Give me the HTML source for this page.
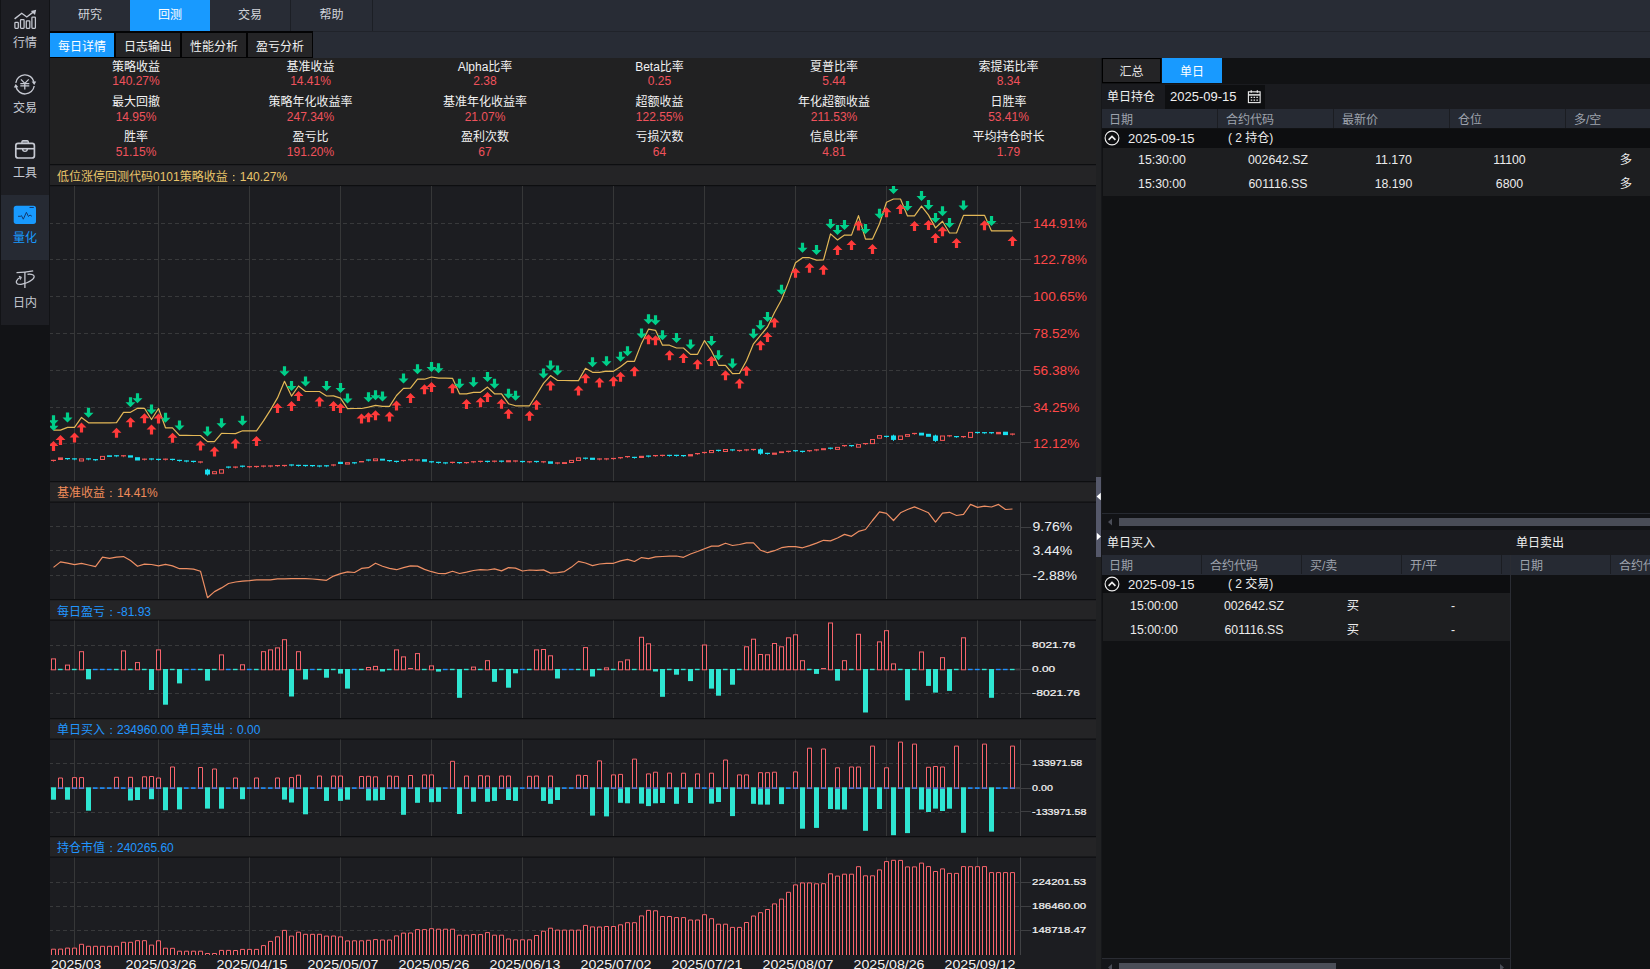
<!DOCTYPE html>
<html lang="zh-CN">
<head>
<meta charset="utf-8">
<title>回测 - 每日详情</title>
<style>
*{box-sizing:border-box;margin:0;padding:0}
html,body{width:1650px;height:969px;overflow:hidden;background:#121316}
body{position:relative;font-family:"Liberation Sans","Noto Sans CJK SC",sans-serif;font-size:12px;color:#e8e8e8;line-height:1}
.abs{position:absolute}
/* sidebar */
#side{position:absolute;left:0;top:0;width:50px;height:969px;background:#121316}
#side .strip{position:absolute;left:1px;top:0;width:48px;height:325px;background:#1d1e23}
.sitem{position:absolute;left:1px;width:48px;height:65px;color:#c6c9d2;text-align:center}
.sitem.sel{background:#262a33;color:#189aff}
.sitem svg{position:absolute}
.sitem span{position:absolute;left:0;width:48px;text-align:center;font-size:12px}
/* top */
#top{position:absolute;left:50px;top:0;width:1600px;height:32px;background:#282c35;border-bottom:1px solid #20232a}
.ttab{position:absolute;top:0;height:31px;width:81px;border-right:1px solid #1c1f25;text-align:center;line-height:30.6px;color:#d0d3da;font-size:12px}
.ttab.sel{background:#189aff;color:#fff;border-right:none;width:80px}
#sub{position:absolute;left:50px;top:32px;width:1600px;height:26px;background:#282c35}
.stab{position:absolute;top:1px;height:24px;width:64px;background:#242426;text-align:center;line-height:29px;color:#f0f0f0;font-size:12px;overflow:hidden}
.stab.sel{background:#189aff;color:#fff}
#subbg{position:absolute;left:0;top:-0.6px;width:263px;height:26.6px;background:#030304}
/* stats */
#stats{position:absolute;left:50px;top:58px;width:1046px;height:106px;background:#212122}
.st{position:absolute;width:174px;text-align:center;font-size:12px}
.st b{display:block;font-weight:normal;color:#f2f2f2;height:14.5px;line-height:15px}
.st i{display:block;font-style:normal;color:#f0525c;height:15px;line-height:15px}
/* right panel */
#right{position:absolute;left:1102px;top:58px;width:548px;height:911px;background:#111214;overflow:hidden}
.rt{position:absolute;white-space:nowrap;font-size:12px;color:#f0f0f0}
.hd{position:absolute;background:#262a33;height:19px}
.hd span{position:absolute;top:2px;line-height:19px;color:#9ea3ad;font-size:12px;white-space:nowrap}
.hd u{position:absolute;top:0;width:1px;height:19px;background:#1b1d22}
.grp{position:absolute;background:#0d0e10;height:19px}
.row{position:absolute;background:#1d1e20;height:24px;border-left:1px solid #111214}
.row span,.grp span{position:absolute;top:1px;white-space:nowrap;color:#ececec;font-size:12px}
.row span{line-height:24px;text-align:center;font-size:12.3px}
.grp span{line-height:19px;top:0.3px}
.row.up span{top:0}
</style>
</head>
<body>
<div id="side">
 <div class="strip"></div>
 <div class="sitem" style="top:0">
  <svg width="48" height="65" viewBox="1 0 48 65" style="left:0;top:0" fill="none" stroke="#c6c9d2" stroke-width="1.25"><rect x="14.9" y="22.4" width="3.4" height="5.9" rx="0.7"/><rect x="20.5" y="19.6" width="3.6" height="8.7" rx="0.7"/><rect x="26.3" y="20.9" width="3.5" height="7.4" rx="0.7"/><rect x="31.9" y="17.1" width="3.5" height="11.2" rx="0.7"/><path d="M14.6 18.9L21.7 13.3L26.8 17L33.5 11.9" stroke-width="1.4"/><path d="M36.2 9.8L30.8 10.9L35 14.9z" fill="#c6c9d2" stroke="none"/></svg>
  <span style="top:36.5px">行情</span></div>
 <div class="sitem" style="top:65px">
  <svg width="48" height="65" viewBox="1 0 48 65" style="left:0;top:0" fill="none" stroke="#c6c9d2" stroke-width="1.35"><path d="M15.8 17.8A9.3 9.3 0 0 1 34 16.8"/><path d="M34.2 21A9.3 9.3 0 0 1 16 22"/><path d="M36.2 16.4L34.3 19.9L31.6 16.6z" fill="#c6c9d2" stroke="none"/><path d="M13.8 22.4L15.7 18.9L18.4 22.2z" fill="#c6c9d2" stroke="none"/><path d="M20.9 14.4L24.8 18.4L28.7 14.4M24.8 18.4V24.6M20.3 18.7H29.3M20.3 20.8H29.3" stroke-width="1.25"/></svg>
  <span style="top:36.5px">交易</span></div>
 <div class="sitem" style="top:130px">
  <svg width="48" height="65" viewBox="1 0 48 65" style="left:0;top:0" fill="none" stroke="#c6c9d2" stroke-width="1.7"><rect x="15.8" y="13.4" width="18.6" height="14.6" rx="2.3"/><path d="M21.9 13V11.8Q21.9 10.6 23.1 10.6H27.1Q28.3 10.6 28.3 11.8V13" fill="#8d909a" stroke-width="1.3"/><path d="M16 18.7H34.2" stroke-width="1.6"/><path d="M22.6 19A2.35 2.35 0 0 0 27.3 19" stroke-width="1.4"/></svg>
  <span style="top:37px">工具</span></div>
 <div class="sitem sel" style="top:195px">
  <svg width="48" height="65" viewBox="1 0 48 65" style="left:0;top:0"><rect x="13.7" y="10.7" width="22.3" height="18.2" rx="2.6" fill="#189aff"/><path d="M18 21.3H20.6L21.4 20.6L23.3 24.2L26.4 17.3L28.5 21.5L30 20L31.9 21.3" fill="none" stroke="#143a70" stroke-width="1"/><path d="M29.5 12.5H33.8" stroke="#143a70" stroke-width="1"/></svg>
  <span style="top:37px">量化</span></div>
 <div class="sitem" style="top:260px">
  <svg width="48" height="65" viewBox="1 0 48 65" style="left:0;top:0" fill="none" stroke="#c6c9d2" stroke-width="1.3"><path d="M16.5 12.6Q25 12.6 33.2 10.9"/><path d="M24.9 12V28"/><path d="M20.6 17.4Q17.5 18.5 16.4 21.2Q15.6 24.6 21 24.3Q27 23.8 32.4 19.6Q35.5 16.6 33.2 15Q30.5 13.8 27.5 14.4"/><path d="M18.9 16.2L21.2 17.3L20.3 19.6" stroke-width="1.1"/></svg>
  <span style="top:37px">日内</span></div>
</div>

<div id="top">
 <div class="ttab" style="left:0">研究</div>
 <div class="ttab sel" style="left:80px">回测</div>
 <div class="ttab" style="left:160px">交易</div>
 <div class="ttab" style="left:241px;width:82px">帮助</div>
</div>
<div id="sub">
 <div id="subbg"></div>
 <div class="stab sel" style="left:0">每日详情</div>
 <div class="stab" style="left:66px">日志输出</div>
 <div class="stab" style="left:132px">性能分析</div>
 <div class="stab" style="left:198px">盈亏分析</div>
</div>

<div id="stats">
<div class="st" style="left:-1.0px;top:2px"><b style="height:13.5px">策略收益</b><i>140.27%</i></div>
<div class="st" style="left:173.5px;top:2px"><b style="height:13.5px">基准收益</b><i>14.41%</i></div>
<div class="st" style="left:348.0px;top:2px"><b style="height:13.5px">Alpha比率</b><i>2.38</i></div>
<div class="st" style="left:522.5px;top:2px"><b style="height:13.5px">Beta比率</b><i>0.25</i></div>
<div class="st" style="left:697.0px;top:2px"><b style="height:13.5px">夏普比率</b><i>5.44</i></div>
<div class="st" style="left:871.5px;top:2px"><b style="height:13.5px">索提诺比率</b><i>8.34</i></div>
<div class="st" style="left:-1.0px;top:37px"><b style="height:15px">最大回撤</b><i>14.95%</i></div>
<div class="st" style="left:173.5px;top:37px"><b style="height:15px">策略年化收益率</b><i>247.34%</i></div>
<div class="st" style="left:348.0px;top:37px"><b style="height:15px">基准年化收益率</b><i>21.07%</i></div>
<div class="st" style="left:522.5px;top:37px"><b style="height:15px">超额收益</b><i>122.55%</i></div>
<div class="st" style="left:697.0px;top:37px"><b style="height:15px">年化超额收益</b><i>211.53%</i></div>
<div class="st" style="left:871.5px;top:37px"><b style="height:15px">日胜率</b><i>53.41%</i></div>
<div class="st" style="left:-1.0px;top:72px"><b style="height:15px">胜率</b><i>51.15%</i></div>
<div class="st" style="left:173.5px;top:72px"><b style="height:15px">盈亏比</b><i>191.20%</i></div>
<div class="st" style="left:348.0px;top:72px"><b style="height:15px">盈利次数</b><i>67</i></div>
<div class="st" style="left:522.5px;top:72px"><b style="height:15px">亏损次数</b><i>64</i></div>
<div class="st" style="left:697.0px;top:72px"><b style="height:15px">信息比率</b><i>4.81</i></div>
<div class="st" style="left:871.5px;top:72px"><b style="height:15px">平均持仓时长</b><i>1.79</i></div>

</div>

<svg id="charts" width="1650" height="969" viewBox="0 0 1650 969" style="position:absolute;left:0;top:0"><defs><clipPath id="c1"><rect x="50" y="186" width="1046" height="295"/></clipPath><clipPath id="c2"><rect x="50" y="502.5" width="1046" height="96.5"/></clipPath><clipPath id="c3"><rect x="50" y="620.5" width="1046" height="97.5"/></clipPath><clipPath id="c4"><rect x="50" y="739.5" width="1046" height="96.5"/></clipPath><clipPath id="c5"><rect x="50" y="857.5" width="1046" height="97.5"/></clipPath></defs><rect x="50" y="164" width="1046" height="805" fill="#1c1d21"/><rect x="50" y="164" width="1046" height="22" fill="#242426"/><rect x="50" y="164" width="1046" height="1.2" fill="#0d0e10"/><rect x="50" y="185" width="1046" height="1.2" fill="#0d0e10"/><rect x="50" y="481" width="1046" height="21.5" fill="#242426"/><rect x="50" y="481" width="1046" height="1.2" fill="#0d0e10"/><rect x="50" y="501.5" width="1046" height="1.2" fill="#0d0e10"/><rect x="50" y="599" width="1046" height="21.5" fill="#242426"/><rect x="50" y="599" width="1046" height="1.2" fill="#0d0e10"/><rect x="50" y="619.5" width="1046" height="1.2" fill="#0d0e10"/><rect x="50" y="718" width="1046" height="21.5" fill="#242426"/><rect x="50" y="718" width="1046" height="1.2" fill="#0d0e10"/><rect x="50" y="738.5" width="1046" height="1.2" fill="#0d0e10"/><rect x="50" y="836" width="1046" height="21.5" fill="#242426"/><rect x="50" y="836" width="1046" height="1.2" fill="#0d0e10"/><rect x="50" y="856.5" width="1046" height="1.2" fill="#0d0e10"/><rect x="74.0" y="186" width="1" height="295" fill="#363738"/><rect x="158.0" y="186" width="1" height="295" fill="#363738"/><rect x="249.0" y="186" width="1" height="295" fill="#363738"/><rect x="340.0" y="186" width="1" height="295" fill="#363738"/><rect x="431.0" y="186" width="1" height="295" fill="#363738"/><rect x="522.0" y="186" width="1" height="295" fill="#363738"/><rect x="613.0" y="186" width="1" height="295" fill="#363738"/><rect x="704.0" y="186" width="1" height="295" fill="#363738"/><rect x="795.0" y="186" width="1" height="295" fill="#363738"/><rect x="886.0" y="186" width="1" height="295" fill="#363738"/><rect x="977.0" y="186" width="1" height="295" fill="#363738"/><rect x="1020" y="186" width="1" height="295" fill="#404144"/><rect x="74.0" y="502.5" width="1" height="96.5" fill="#363738"/><rect x="158.0" y="502.5" width="1" height="96.5" fill="#363738"/><rect x="249.0" y="502.5" width="1" height="96.5" fill="#363738"/><rect x="340.0" y="502.5" width="1" height="96.5" fill="#363738"/><rect x="431.0" y="502.5" width="1" height="96.5" fill="#363738"/><rect x="522.0" y="502.5" width="1" height="96.5" fill="#363738"/><rect x="613.0" y="502.5" width="1" height="96.5" fill="#363738"/><rect x="704.0" y="502.5" width="1" height="96.5" fill="#363738"/><rect x="795.0" y="502.5" width="1" height="96.5" fill="#363738"/><rect x="886.0" y="502.5" width="1" height="96.5" fill="#363738"/><rect x="977.0" y="502.5" width="1" height="96.5" fill="#363738"/><rect x="1020" y="502.5" width="1" height="96.5" fill="#404144"/><rect x="74.0" y="620.5" width="1" height="97.5" fill="#363738"/><rect x="158.0" y="620.5" width="1" height="97.5" fill="#363738"/><rect x="249.0" y="620.5" width="1" height="97.5" fill="#363738"/><rect x="340.0" y="620.5" width="1" height="97.5" fill="#363738"/><rect x="431.0" y="620.5" width="1" height="97.5" fill="#363738"/><rect x="522.0" y="620.5" width="1" height="97.5" fill="#363738"/><rect x="613.0" y="620.5" width="1" height="97.5" fill="#363738"/><rect x="704.0" y="620.5" width="1" height="97.5" fill="#363738"/><rect x="795.0" y="620.5" width="1" height="97.5" fill="#363738"/><rect x="886.0" y="620.5" width="1" height="97.5" fill="#363738"/><rect x="977.0" y="620.5" width="1" height="97.5" fill="#363738"/><rect x="1020" y="620.5" width="1" height="97.5" fill="#404144"/><rect x="74.0" y="739.5" width="1" height="96.5" fill="#363738"/><rect x="158.0" y="739.5" width="1" height="96.5" fill="#363738"/><rect x="249.0" y="739.5" width="1" height="96.5" fill="#363738"/><rect x="340.0" y="739.5" width="1" height="96.5" fill="#363738"/><rect x="431.0" y="739.5" width="1" height="96.5" fill="#363738"/><rect x="522.0" y="739.5" width="1" height="96.5" fill="#363738"/><rect x="613.0" y="739.5" width="1" height="96.5" fill="#363738"/><rect x="704.0" y="739.5" width="1" height="96.5" fill="#363738"/><rect x="795.0" y="739.5" width="1" height="96.5" fill="#363738"/><rect x="886.0" y="739.5" width="1" height="96.5" fill="#363738"/><rect x="977.0" y="739.5" width="1" height="96.5" fill="#363738"/><rect x="1020" y="739.5" width="1" height="96.5" fill="#404144"/><rect x="74.0" y="857.5" width="1" height="97.5" fill="#363738"/><rect x="158.0" y="857.5" width="1" height="97.5" fill="#363738"/><rect x="249.0" y="857.5" width="1" height="97.5" fill="#363738"/><rect x="340.0" y="857.5" width="1" height="97.5" fill="#363738"/><rect x="431.0" y="857.5" width="1" height="97.5" fill="#363738"/><rect x="522.0" y="857.5" width="1" height="97.5" fill="#363738"/><rect x="613.0" y="857.5" width="1" height="97.5" fill="#363738"/><rect x="704.0" y="857.5" width="1" height="97.5" fill="#363738"/><rect x="795.0" y="857.5" width="1" height="97.5" fill="#363738"/><rect x="886.0" y="857.5" width="1" height="97.5" fill="#363738"/><rect x="977.0" y="857.5" width="1" height="97.5" fill="#363738"/><rect x="1020" y="857.5" width="1" height="97.5" fill="#404144"/><line x1="50" y1="223.5" x2="1020" y2="223.5" stroke="#38393b" stroke-width="1" stroke-dasharray="4 3" stroke-dashoffset="1"/><line x1="50" y1="259.5" x2="1020" y2="259.5" stroke="#38393b" stroke-width="1" stroke-dasharray="4 3" stroke-dashoffset="1"/><line x1="50" y1="296.5" x2="1020" y2="296.5" stroke="#38393b" stroke-width="1" stroke-dasharray="4 3" stroke-dashoffset="1"/><line x1="50" y1="333.5" x2="1020" y2="333.5" stroke="#38393b" stroke-width="1" stroke-dasharray="4 3" stroke-dashoffset="1"/><line x1="50" y1="370.5" x2="1020" y2="370.5" stroke="#38393b" stroke-width="1" stroke-dasharray="4 3" stroke-dashoffset="1"/><line x1="50" y1="407.5" x2="1020" y2="407.5" stroke="#38393b" stroke-width="1" stroke-dasharray="4 3" stroke-dashoffset="1"/><line x1="50" y1="443.5" x2="1020" y2="443.5" stroke="#38393b" stroke-width="1" stroke-dasharray="4 3" stroke-dashoffset="1"/><rect x="1021" y="222.0" width="10" height="1" fill="#3e3f42"/><rect x="1021" y="259.0" width="10" height="1" fill="#3e3f42"/><rect x="1021" y="296.0" width="10" height="1" fill="#3e3f42"/><rect x="1021" y="333.0" width="10" height="1" fill="#3e3f42"/><rect x="1021" y="370.0" width="10" height="1" fill="#3e3f42"/><rect x="1021" y="406.0" width="10" height="1" fill="#3e3f42"/><rect x="1021" y="442.0" width="10" height="1" fill="#3e3f42"/><line x1="50" y1="526.5" x2="1020" y2="526.5" stroke="#38393b" stroke-width="1" stroke-dasharray="4 3" stroke-dashoffset="1"/><line x1="50" y1="550.5" x2="1020" y2="550.5" stroke="#38393b" stroke-width="1" stroke-dasharray="4 3" stroke-dashoffset="1"/><line x1="50" y1="575.5" x2="1020" y2="575.5" stroke="#38393b" stroke-width="1" stroke-dasharray="4 3" stroke-dashoffset="1"/><rect x="1021" y="527.0" width="10" height="1" fill="#3e3f42"/><rect x="1021" y="574.0" width="10" height="1" fill="#3e3f42"/><line x1="50" y1="645.5" x2="1020" y2="645.5" stroke="#38393b" stroke-width="1" stroke-dasharray="4 3" stroke-dashoffset="1"/><line x1="50" y1="669.5" x2="1020" y2="669.5" stroke="#38393b" stroke-width="1" stroke-dasharray="4 3" stroke-dashoffset="1"/><line x1="50" y1="693.5" x2="1020" y2="693.5" stroke="#38393b" stroke-width="1" stroke-dasharray="4 3" stroke-dashoffset="1"/><rect x="1021" y="645.0" width="10" height="1" fill="#3e3f42"/><rect x="1021" y="669.0" width="10" height="1" fill="#3e3f42"/><rect x="1021" y="693.0" width="10" height="1" fill="#3e3f42"/><line x1="50" y1="763.5" x2="1020" y2="763.5" stroke="#38393b" stroke-width="1" stroke-dasharray="4 3" stroke-dashoffset="1"/><line x1="50" y1="788" x2="1020" y2="788" stroke="#38393b" stroke-width="1" stroke-dasharray="4 3" stroke-dashoffset="1"/><line x1="50" y1="812.5" x2="1020" y2="812.5" stroke="#38393b" stroke-width="1" stroke-dasharray="4 3" stroke-dashoffset="1"/><rect x="1021" y="764.0" width="10" height="1" fill="#3e3f42"/><rect x="1021" y="788.0" width="10" height="1" fill="#3e3f42"/><rect x="1021" y="811.0" width="10" height="1" fill="#3e3f42"/><line x1="50" y1="882.5" x2="1020" y2="882.5" stroke="#38393b" stroke-width="1" stroke-dasharray="4 3" stroke-dashoffset="1"/><line x1="50" y1="906.5" x2="1020" y2="906.5" stroke="#38393b" stroke-width="1" stroke-dasharray="4 3" stroke-dashoffset="1"/><line x1="50" y1="930.5" x2="1020" y2="930.5" stroke="#38393b" stroke-width="1" stroke-dasharray="4 3" stroke-dashoffset="1"/><rect x="1021" y="882.0" width="10" height="1" fill="#3e3f42"/><rect x="1021" y="906.0" width="10" height="1" fill="#3e3f42"/><rect x="1021" y="930.0" width="10" height="1" fill="#3e3f42"/><text x="1033" y="228.1" font-family="Liberation Sans, Noto Sans CJK SC, sans-serif" font-size="12.2" font-weight="normal" fill="#ff4848" textLength="54" lengthAdjust="spacingAndGlyphs">144.91%</text><text x="1033" y="264.1" font-family="Liberation Sans, Noto Sans CJK SC, sans-serif" font-size="12.2" font-weight="normal" fill="#ff4848" textLength="54" lengthAdjust="spacingAndGlyphs">122.78%</text><text x="1033" y="301.1" font-family="Liberation Sans, Noto Sans CJK SC, sans-serif" font-size="12.2" font-weight="normal" fill="#ff4848" textLength="54" lengthAdjust="spacingAndGlyphs">100.65%</text><text x="1033" y="338.1" font-family="Liberation Sans, Noto Sans CJK SC, sans-serif" font-size="12.2" font-weight="normal" fill="#ff4848" textLength="46.3" lengthAdjust="spacingAndGlyphs">78.52%</text><text x="1033" y="375.1" font-family="Liberation Sans, Noto Sans CJK SC, sans-serif" font-size="12.2" font-weight="normal" fill="#ff4848" textLength="46.3" lengthAdjust="spacingAndGlyphs">56.38%</text><text x="1033" y="412.1" font-family="Liberation Sans, Noto Sans CJK SC, sans-serif" font-size="12.2" font-weight="normal" fill="#ff4848" textLength="46.3" lengthAdjust="spacingAndGlyphs">34.25%</text><text x="1033" y="448.1" font-family="Liberation Sans, Noto Sans CJK SC, sans-serif" font-size="12.2" font-weight="normal" fill="#ff4848" textLength="46.3" lengthAdjust="spacingAndGlyphs">12.12%</text><text x="1032.5" y="531.1" font-family="Liberation Sans, Noto Sans CJK SC, sans-serif" font-size="12.2" font-weight="normal" fill="#eef0f2" textLength="39.7" lengthAdjust="spacingAndGlyphs">9.76%</text><text x="1032.5" y="555.1" font-family="Liberation Sans, Noto Sans CJK SC, sans-serif" font-size="12.2" font-weight="normal" fill="#eef0f2" textLength="39.7" lengthAdjust="spacingAndGlyphs">3.44%</text><text x="1032.5" y="580.1" font-family="Liberation Sans, Noto Sans CJK SC, sans-serif" font-size="12.2" font-weight="normal" fill="#eef0f2" textLength="44.5" lengthAdjust="spacingAndGlyphs">-2.88%</text><text x="1032.1" y="648.0" font-family="Liberation Sans, Noto Sans CJK SC, sans-serif" font-size="9.7" fill="#f4f4f4" stroke="#f4f4f4" stroke-width="0.22" textLength="43.3" lengthAdjust="spacingAndGlyphs">8021.76</text><text x="1032.1" y="672.0" font-family="Liberation Sans, Noto Sans CJK SC, sans-serif" font-size="9.7" fill="#f4f4f4" stroke="#f4f4f4" stroke-width="0.22" textLength="23.1" lengthAdjust="spacingAndGlyphs">0.00</text><text x="1032.1" y="696.0" font-family="Liberation Sans, Noto Sans CJK SC, sans-serif" font-size="9.7" fill="#f4f4f4" stroke="#f4f4f4" stroke-width="0.22" textLength="48" lengthAdjust="spacingAndGlyphs">-8021.76</text><text x="1032.1" y="766.0" font-family="Liberation Sans, Noto Sans CJK SC, sans-serif" font-size="9.7" fill="#f4f4f4" stroke="#f4f4f4" stroke-width="0.22" textLength="50.1" lengthAdjust="spacingAndGlyphs">133971.58</text><text x="1032.1" y="790.5" font-family="Liberation Sans, Noto Sans CJK SC, sans-serif" font-size="9.7" fill="#f4f4f4" stroke="#f4f4f4" stroke-width="0.22" textLength="20.8" lengthAdjust="spacingAndGlyphs">0.00</text><text x="1032.1" y="815.0" font-family="Liberation Sans, Noto Sans CJK SC, sans-serif" font-size="9.7" fill="#f4f4f4" stroke="#f4f4f4" stroke-width="0.22" textLength="54.3" lengthAdjust="spacingAndGlyphs">-133971.58</text><text x="1032.1" y="885.0" font-family="Liberation Sans, Noto Sans CJK SC, sans-serif" font-size="9.7" fill="#f4f4f4" stroke="#f4f4f4" stroke-width="0.22" textLength="54.1" lengthAdjust="spacingAndGlyphs">224201.53</text><text x="1032.1" y="909.0" font-family="Liberation Sans, Noto Sans CJK SC, sans-serif" font-size="9.7" fill="#f4f4f4" stroke="#f4f4f4" stroke-width="0.22" textLength="54.1" lengthAdjust="spacingAndGlyphs">186460.00</text><text x="1032.1" y="933.0" font-family="Liberation Sans, Noto Sans CJK SC, sans-serif" font-size="9.7" fill="#f4f4f4" stroke="#f4f4f4" stroke-width="0.22" textLength="54.1" lengthAdjust="spacingAndGlyphs">148718.47</text><text x="57" y="180.6" font-family="Liberation Sans, Noto Sans CJK SC, sans-serif" font-size="12"><tspan fill="#e9c46a">低位涨停回测代码0101策略收益<tspan font-family="WenQuanYi Zen Hei, sans-serif">：</tspan>140.27%</tspan></text><text x="57" y="497.2" font-family="Liberation Sans, Noto Sans CJK SC, sans-serif" font-size="12"><tspan fill="#f08c5a">基准收益<tspan font-family="WenQuanYi Zen Hei, sans-serif">：</tspan>14.41%</tspan></text><text x="57" y="615.6" font-family="Liberation Sans, Noto Sans CJK SC, sans-serif" font-size="12"><tspan fill="#2196ff">每日盈亏<tspan font-family="WenQuanYi Zen Hei, sans-serif">：</tspan>-81.93</tspan></text><text x="57" y="733.8" font-family="Liberation Sans, Noto Sans CJK SC, sans-serif" font-size="12"><tspan fill="#2196ff">单日买入<tspan font-family="WenQuanYi Zen Hei, sans-serif">：</tspan>234960.00 单日卖出<tspan font-family="WenQuanYi Zen Hei, sans-serif">：</tspan>0.00</tspan></text><text x="57" y="852.4" font-family="Liberation Sans, Noto Sans CJK SC, sans-serif" font-size="12"><tspan fill="#2196ff">持仓市值<tspan font-family="WenQuanYi Zen Hei, sans-serif">：</tspan>240265.60</tspan></text><g clip-path="url(#c1)"><rect x="51" y="459.8" width="5" height="1.2" fill="#f25555"/><rect x="53" y="459.8" width="1" height="2" fill="#f25555" opacity="0.7"/><rect x="58" y="457.4" width="5" height="2.6" fill="#f25555"/><rect x="65" y="458" width="5" height="1.2" fill="#19dff0"/><rect x="67" y="458" width="1" height="2" fill="#19dff0" opacity="0.7"/><rect x="72" y="458.3" width="5" height="1.2" fill="#19dff0"/><rect x="74" y="458.3" width="1" height="2" fill="#19dff0" opacity="0.7"/><rect x="79.5" y="458.9" width="4" height="2.1" fill="none" stroke="#f25555" stroke-width="1"/><rect x="86" y="458.3" width="5" height="1.2" fill="#19dff0"/><rect x="88" y="458.3" width="1" height="2" fill="#19dff0" opacity="0.7"/><rect x="93" y="459.1" width="5" height="1.2" fill="#19dff0"/><rect x="95" y="459.1" width="1" height="2" fill="#19dff0" opacity="0.7"/><rect x="100.5" y="456.4" width="4" height="3.1" fill="none" stroke="#f25555" stroke-width="1"/><rect x="107" y="455.3" width="5" height="1.6" fill="#19dff0"/><rect x="114" y="455.2" width="5" height="1.2" fill="#19dff0"/><rect x="116" y="455.2" width="1" height="2" fill="#19dff0" opacity="0.7"/><rect x="121" y="455.2" width="5" height="1.2" fill="#f25555"/><rect x="123" y="455.2" width="1" height="2" fill="#f25555" opacity="0.7"/><rect x="128" y="455.3" width="5" height="2.3" fill="#19dff0"/><rect x="135" y="457.2" width="5" height="3.3" fill="#19dff0"/><rect x="142" y="458.6" width="5" height="1.2" fill="#f25555"/><rect x="144" y="458.6" width="1" height="2" fill="#f25555" opacity="0.7"/><rect x="149" y="458.4" width="5" height="1.2" fill="#19dff0"/><rect x="151" y="458.4" width="1" height="2" fill="#19dff0" opacity="0.7"/><rect x="156" y="458.8" width="5" height="1.2" fill="#19dff0"/><rect x="158" y="458.8" width="1" height="2" fill="#19dff0" opacity="0.7"/><rect x="163" y="458.6" width="5" height="1.2" fill="#f25555"/><rect x="165" y="458.6" width="1" height="2" fill="#f25555" opacity="0.7"/><rect x="170" y="458.8" width="5" height="1.2" fill="#19dff0"/><rect x="172" y="458.8" width="1" height="2" fill="#19dff0" opacity="0.7"/><rect x="177" y="459.8" width="5" height="1.2" fill="#19dff0"/><rect x="179" y="459.8" width="1" height="2" fill="#19dff0" opacity="0.7"/><rect x="184" y="460.4" width="5" height="1.2" fill="#19dff0"/><rect x="186" y="460.4" width="1" height="2" fill="#19dff0" opacity="0.7"/><rect x="191" y="460.8" width="5" height="1.2" fill="#19dff0"/><rect x="193" y="460.8" width="1" height="2" fill="#19dff0" opacity="0.7"/><rect x="198" y="461.4" width="5" height="1.2" fill="#f25555"/><rect x="200" y="461.4" width="1" height="2" fill="#f25555" opacity="0.7"/><rect x="205" y="469.6" width="5" height="4.9" fill="#19dff0"/><rect x="207" y="468.8" width="1" height="6.7" fill="#19dff0"/><rect x="212.5" y="471.7" width="4" height="2" fill="none" stroke="#f25555" stroke-width="1"/><rect x="219.5" y="469.7" width="4" height="3.5" fill="none" stroke="#f25555" stroke-width="1"/><rect x="226" y="466.5" width="5" height="1.2" fill="#19dff0"/><rect x="228" y="466.5" width="1" height="2" fill="#19dff0" opacity="0.7"/><rect x="233" y="466.5" width="5" height="1.2" fill="#f25555"/><rect x="235" y="466.5" width="1" height="2" fill="#f25555" opacity="0.7"/><rect x="240" y="465.6" width="5" height="1.2" fill="#19dff0"/><rect x="242" y="465.6" width="1" height="2" fill="#19dff0" opacity="0.7"/><rect x="247" y="466.1" width="5" height="1.2" fill="#f25555"/><rect x="249" y="466.1" width="1" height="2" fill="#f25555" opacity="0.7"/><rect x="254" y="465.9" width="5" height="1.2" fill="#f25555"/><rect x="256" y="465.9" width="1" height="2" fill="#f25555" opacity="0.7"/><rect x="261" y="465.5" width="5" height="1.2" fill="#f25555"/><rect x="263" y="465.5" width="1" height="2" fill="#f25555" opacity="0.7"/><rect x="268" y="465.4" width="5" height="1.2" fill="#f25555"/><rect x="270" y="465.4" width="1" height="2" fill="#f25555" opacity="0.7"/><rect x="275" y="465" width="5" height="1.2" fill="#f25555"/><rect x="277" y="465" width="1" height="2" fill="#f25555" opacity="0.7"/><rect x="282" y="464.9" width="5" height="1.2" fill="#f25555"/><rect x="284" y="464.9" width="1" height="2" fill="#f25555" opacity="0.7"/><rect x="289" y="464.4" width="5" height="1.2" fill="#19dff0"/><rect x="291" y="464.4" width="1" height="2" fill="#19dff0" opacity="0.7"/><rect x="296" y="464.8" width="5" height="1.2" fill="#19dff0"/><rect x="298" y="464.8" width="1" height="2" fill="#19dff0" opacity="0.7"/><rect x="303" y="464.9" width="5" height="1.2" fill="#19dff0"/><rect x="305" y="464.9" width="1" height="2" fill="#19dff0" opacity="0.7"/><rect x="310" y="465" width="5" height="1.2" fill="#19dff0"/><rect x="312" y="465" width="1" height="2" fill="#19dff0" opacity="0.7"/><rect x="317" y="465.4" width="5" height="1.2" fill="#19dff0"/><rect x="319" y="465.4" width="1" height="2" fill="#19dff0" opacity="0.7"/><rect x="324" y="465.2" width="5" height="1.2" fill="#19dff0"/><rect x="326" y="465.2" width="1" height="2" fill="#19dff0" opacity="0.7"/><rect x="331" y="464.4" width="5" height="1.2" fill="#f25555"/><rect x="333" y="464.4" width="1" height="2" fill="#f25555" opacity="0.7"/><rect x="338" y="461.8" width="5" height="2.2" fill="#19dff0"/><rect x="345.5" y="462.7" width="4" height="1.4" fill="none" stroke="#f25555" stroke-width="1"/><rect x="352" y="462.2" width="5" height="1.2" fill="#19dff0"/><rect x="354" y="462.2" width="1" height="2" fill="#19dff0" opacity="0.7"/><rect x="359" y="461" width="5" height="1.4" fill="#f25555"/><rect x="366" y="459.4" width="5" height="1.2" fill="#19dff0"/><rect x="368" y="459.4" width="1" height="2" fill="#19dff0" opacity="0.7"/><rect x="373.5" y="458.9" width="4" height="1.8" fill="none" stroke="#f25555" stroke-width="1"/><rect x="380" y="458.7" width="5" height="1.9" fill="#19dff0"/><rect x="387" y="460" width="5" height="1.2" fill="#19dff0"/><rect x="389" y="460" width="1" height="2" fill="#19dff0" opacity="0.7"/><rect x="394" y="460.8" width="5" height="1.2" fill="#19dff0"/><rect x="396" y="460.8" width="1" height="2" fill="#19dff0" opacity="0.7"/><rect x="401" y="459.9" width="5" height="1.2" fill="#f25555"/><rect x="403" y="459.9" width="1" height="2" fill="#f25555" opacity="0.7"/><rect x="408" y="459.2" width="5" height="1.2" fill="#f25555"/><rect x="410" y="459.2" width="1" height="2" fill="#f25555" opacity="0.7"/><rect x="415" y="459.4" width="5" height="1.2" fill="#f25555"/><rect x="417" y="459.4" width="1" height="2" fill="#f25555" opacity="0.7"/><rect x="422" y="459.2" width="5" height="2.5" fill="#19dff0"/><rect x="429" y="461.2" width="5" height="1.2" fill="#19dff0"/><rect x="431" y="461.2" width="1" height="2" fill="#19dff0" opacity="0.7"/><rect x="436" y="461.8" width="5" height="1.2" fill="#19dff0"/><rect x="438" y="461.8" width="1" height="2" fill="#19dff0" opacity="0.7"/><rect x="443" y="462.3" width="5" height="1.2" fill="#19dff0"/><rect x="445" y="462.3" width="1" height="2" fill="#19dff0" opacity="0.7"/><rect x="450" y="461.8" width="5" height="1.2" fill="#f25555"/><rect x="452" y="461.8" width="1" height="2" fill="#f25555" opacity="0.7"/><rect x="457" y="462" width="5" height="1.2" fill="#19dff0"/><rect x="459" y="462" width="1" height="2" fill="#19dff0" opacity="0.7"/><rect x="464" y="462" width="5" height="1.2" fill="#f25555"/><rect x="466" y="462" width="1" height="2" fill="#f25555" opacity="0.7"/><rect x="471" y="461.2" width="5" height="1.2" fill="#f25555"/><rect x="473" y="461.2" width="1" height="2" fill="#f25555" opacity="0.7"/><rect x="478" y="460.8" width="5" height="1.2" fill="#f25555"/><rect x="480" y="460.8" width="1" height="2" fill="#f25555" opacity="0.7"/><rect x="485" y="460.8" width="5" height="1.2" fill="#19dff0"/><rect x="487" y="460.8" width="1" height="2" fill="#19dff0" opacity="0.7"/><rect x="492" y="460.6" width="5" height="1.2" fill="#f25555"/><rect x="494" y="460.6" width="1" height="2" fill="#f25555" opacity="0.7"/><rect x="499" y="460.6" width="5" height="1.2" fill="#19dff0"/><rect x="501" y="460.6" width="1" height="2" fill="#19dff0" opacity="0.7"/><rect x="506" y="460.2" width="5" height="2.1" fill="#f25555"/><rect x="513" y="460.4" width="5" height="1.2" fill="#f25555"/><rect x="515" y="460.4" width="1" height="2" fill="#f25555" opacity="0.7"/><rect x="520" y="460.9" width="5" height="1.2" fill="#19dff0"/><rect x="522" y="460.9" width="1" height="2" fill="#19dff0" opacity="0.7"/><rect x="527" y="461.2" width="5" height="1.2" fill="#f25555"/><rect x="529" y="461.2" width="1" height="2" fill="#f25555" opacity="0.7"/><rect x="534" y="460.9" width="5" height="1.2" fill="#19dff0"/><rect x="536" y="460.9" width="1" height="2" fill="#19dff0" opacity="0.7"/><rect x="541" y="461.2" width="5" height="1.2" fill="#f25555"/><rect x="543" y="461.2" width="1" height="2" fill="#f25555" opacity="0.7"/><rect x="548" y="461.3" width="5" height="2.5" fill="#19dff0"/><rect x="555" y="462.4" width="5" height="1.2" fill="#f25555"/><rect x="557" y="462.4" width="1" height="2" fill="#f25555" opacity="0.7"/><rect x="562" y="462.1" width="5" height="1.9" fill="#f25555"/><rect x="569.5" y="460.4" width="4" height="2.1" fill="none" stroke="#f25555" stroke-width="1"/><rect x="576.5" y="457.9" width="4" height="2.6" fill="none" stroke="#f25555" stroke-width="1"/><rect x="583" y="457.6" width="5" height="1.2" fill="#19dff0"/><rect x="585" y="457.6" width="1" height="2" fill="#19dff0" opacity="0.7"/><rect x="590" y="457.7" width="5" height="2.2" fill="#19dff0"/><rect x="597" y="458.4" width="5" height="1.2" fill="#f25555"/><rect x="599" y="458.4" width="1" height="2" fill="#f25555" opacity="0.7"/><rect x="604" y="458.3" width="5" height="1.2" fill="#f25555"/><rect x="606" y="458.3" width="1" height="2" fill="#f25555" opacity="0.7"/><rect x="611" y="457.9" width="5" height="1.2" fill="#f25555"/><rect x="613" y="457.9" width="1" height="2" fill="#f25555" opacity="0.7"/><rect x="618" y="457.1" width="5" height="1.2" fill="#f25555"/><rect x="620" y="457.1" width="1" height="2" fill="#f25555" opacity="0.7"/><rect x="625" y="456" width="5" height="1.2" fill="#f25555"/><rect x="627" y="456" width="1" height="2" fill="#f25555" opacity="0.7"/><rect x="632" y="456.8" width="5" height="1.2" fill="#19dff0"/><rect x="634" y="456.8" width="1" height="2" fill="#19dff0" opacity="0.7"/><rect x="639" y="455.8" width="5" height="2.2" fill="#f25555"/><rect x="646" y="455.5" width="5" height="1.2" fill="#19dff0"/><rect x="648" y="455.5" width="1" height="2" fill="#19dff0" opacity="0.7"/><rect x="653" y="455" width="5" height="1.2" fill="#f25555"/><rect x="655" y="455" width="1" height="2" fill="#f25555" opacity="0.7"/><rect x="660" y="454.8" width="5" height="1.2" fill="#f25555"/><rect x="662" y="454.8" width="1" height="2" fill="#f25555" opacity="0.7"/><rect x="667" y="454.8" width="5" height="1.2" fill="#19dff0"/><rect x="669" y="454.8" width="1" height="2" fill="#19dff0" opacity="0.7"/><rect x="674" y="454.8" width="5" height="1.2" fill="#19dff0"/><rect x="676" y="454.8" width="1" height="2" fill="#19dff0" opacity="0.7"/><rect x="681" y="455" width="5" height="1.2" fill="#19dff0"/><rect x="683" y="455" width="1" height="2" fill="#19dff0" opacity="0.7"/><rect x="688" y="454.1" width="5" height="2.3" fill="#f25555"/><rect x="695" y="453" width="5" height="1.2" fill="#f25555"/><rect x="697" y="453" width="1" height="2" fill="#f25555" opacity="0.7"/><rect x="702" y="451.9" width="5" height="1.2" fill="#f25555"/><rect x="704" y="451.9" width="1" height="2" fill="#f25555" opacity="0.7"/><rect x="709.5" y="450.5" width="4" height="2.1" fill="none" stroke="#f25555" stroke-width="1"/><rect x="716" y="449.8" width="5" height="1.2" fill="#19dff0"/><rect x="718" y="449.8" width="1" height="2" fill="#19dff0" opacity="0.7"/><rect x="723.5" y="449.5" width="4" height="2" fill="none" stroke="#f25555" stroke-width="1"/><rect x="730" y="449.3" width="5" height="1.2" fill="#19dff0"/><rect x="732" y="449.3" width="1" height="2" fill="#19dff0" opacity="0.7"/><rect x="737" y="449.9" width="5" height="1.2" fill="#f25555"/><rect x="739" y="449.9" width="1" height="2" fill="#f25555" opacity="0.7"/><rect x="744" y="449.3" width="5" height="1.2" fill="#f25555"/><rect x="746" y="449.3" width="1" height="2" fill="#f25555" opacity="0.7"/><rect x="751" y="448.9" width="5" height="1.2" fill="#f25555"/><rect x="753" y="448.9" width="1" height="2" fill="#f25555" opacity="0.7"/><rect x="758" y="449.3" width="5" height="4.4" fill="#19dff0"/><rect x="760" y="448.5" width="1" height="6.2" fill="#19dff0"/><rect x="765" y="452.8" width="5" height="1.2" fill="#19dff0"/><rect x="767" y="452.8" width="1" height="2" fill="#19dff0" opacity="0.7"/><rect x="772" y="452.6" width="5" height="2.2" fill="#f25555"/><rect x="779" y="451.3" width="5" height="1.8" fill="#f25555"/><rect x="786" y="450.8" width="5" height="1.2" fill="#f25555"/><rect x="788" y="450.8" width="1" height="2" fill="#f25555" opacity="0.7"/><rect x="793" y="450.1" width="5" height="1.2" fill="#19dff0"/><rect x="795" y="450.1" width="1" height="2" fill="#19dff0" opacity="0.7"/><rect x="800" y="450.8" width="5" height="1.2" fill="#19dff0"/><rect x="802" y="450.8" width="1" height="2" fill="#19dff0" opacity="0.7"/><rect x="807" y="450.1" width="5" height="1.2" fill="#f25555"/><rect x="809" y="450.1" width="1" height="2" fill="#f25555" opacity="0.7"/><rect x="814" y="449.3" width="5" height="1.2" fill="#f25555"/><rect x="816" y="449.3" width="1" height="2" fill="#f25555" opacity="0.7"/><rect x="821" y="448.2" width="5" height="2" fill="#f25555"/><rect x="828" y="447.6" width="5" height="1.2" fill="#19dff0"/><rect x="830" y="447.6" width="1" height="2" fill="#19dff0" opacity="0.7"/><rect x="835.5" y="447.4" width="4" height="2" fill="none" stroke="#f25555" stroke-width="1"/><rect x="842" y="445" width="5" height="1.2" fill="#f25555"/><rect x="844" y="445" width="1" height="2" fill="#f25555" opacity="0.7"/><rect x="849" y="445" width="5" height="1.2" fill="#19dff0"/><rect x="851" y="445" width="1" height="2" fill="#19dff0" opacity="0.7"/><rect x="856.5" y="444.6" width="4" height="2.6" fill="none" stroke="#f25555" stroke-width="1"/><rect x="863" y="443" width="5" height="1.2" fill="#f25555"/><rect x="865" y="443" width="1" height="2" fill="#f25555" opacity="0.7"/><rect x="870.5" y="439.5" width="4" height="4.1" fill="none" stroke="#f25555" stroke-width="1"/><rect x="877.5" y="435.6" width="4" height="2.6" fill="none" stroke="#f25555" stroke-width="1"/><rect x="884" y="435.8" width="5" height="1.2" fill="#19dff0"/><rect x="886" y="435.8" width="1" height="2" fill="#19dff0" opacity="0.7"/><rect x="891" y="435.5" width="5" height="4.4" fill="#19dff0"/><rect x="893" y="434.7" width="1" height="6.2" fill="#19dff0"/><rect x="898.5" y="436" width="4" height="3.5" fill="none" stroke="#f25555" stroke-width="1"/><rect x="905.5" y="434.6" width="4" height="1.7" fill="none" stroke="#f25555" stroke-width="1"/><rect x="912" y="432.9" width="5" height="1.2" fill="#f25555"/><rect x="914" y="432.9" width="1" height="2" fill="#f25555" opacity="0.7"/><rect x="919" y="432.7" width="5" height="2.8" fill="#19dff0"/><rect x="926" y="433.8" width="5" height="3" fill="#19dff0"/><rect x="933" y="435.5" width="5" height="5.4" fill="#19dff0"/><rect x="935" y="434.7" width="1" height="7.2" fill="#19dff0"/><rect x="940.5" y="436" width="4" height="4.4" fill="none" stroke="#f25555" stroke-width="1"/><rect x="947" y="435.2" width="5" height="1.2" fill="#f25555"/><rect x="949" y="435.2" width="1" height="2" fill="#f25555" opacity="0.7"/><rect x="954" y="436" width="5" height="1.2" fill="#19dff0"/><rect x="956" y="436" width="1" height="2" fill="#19dff0" opacity="0.7"/><rect x="961" y="436" width="5" height="1.2" fill="#f25555"/><rect x="963" y="436" width="1" height="2" fill="#f25555" opacity="0.7"/><rect x="968.5" y="432.4" width="4" height="5" fill="none" stroke="#f25555" stroke-width="1"/><rect x="975" y="431.9" width="5" height="1.2" fill="#19dff0"/><rect x="977" y="431.9" width="1" height="2" fill="#19dff0" opacity="0.7"/><rect x="982" y="432.1" width="5" height="1.2" fill="#19dff0"/><rect x="984" y="432.1" width="1" height="2" fill="#19dff0" opacity="0.7"/><rect x="989" y="432.1" width="5" height="1.2" fill="#19dff0"/><rect x="991" y="432.1" width="1" height="2" fill="#19dff0" opacity="0.7"/><rect x="996" y="431.9" width="5" height="2.4" fill="#f25555"/><rect x="1003" y="431.7" width="5" height="3.4" fill="#19dff0"/><rect x="1010" y="433.5" width="5" height="1.2" fill="#f25555"/><rect x="1012" y="433.5" width="1" height="2" fill="#f25555" opacity="0.7"/><polyline points="53.5,430.1 60.5,430.1 67.5,427.4 74.5,427.4 81.5,417.4 88.5,422.8 95.5,422.8 102.5,422.8 109.5,422.8 116.5,422.7 123.5,412.3 130.5,412.3 137.5,408.2 144.5,408.3 151.5,419.5 158.5,408.5 165.5,427.8 172.5,427.8 179.5,435.4 186.5,435.4 193.5,435.5 200.5,435.5 207.5,441.6 214.5,441.6 221.5,433.3 228.5,433.5 235.5,433.6 242.5,430.8 249.5,430.8 256.5,430.9 263.5,420.9 270.5,409.9 277.5,397.9 284.5,381.3 291.5,396.1 298.5,386.0 305.5,391.5 312.5,391.5 319.5,391.5 326.5,396.0 333.5,395.9 340.5,398.1 347.5,408.6 354.5,408.5 361.5,408.5 368.5,407.2 375.5,405.3 382.5,406.4 389.5,406.4 396.5,395.5 403.5,388.4 410.5,388.1 417.5,379.2 424.5,379.2 431.5,377.0 438.5,378.2 445.5,378.2 452.5,378.3 459.5,393.8 466.5,393.9 473.5,392.3 480.5,392.3 487.5,387.1 494.5,393.8 501.5,393.8 508.5,403.7 515.5,405.8 522.5,405.8 529.5,405.8 536.5,394.7 543.5,383.4 550.5,375.6 557.5,380.5 564.5,380.5 571.5,380.6 578.5,380.6 585.5,368.3 592.5,372.3 599.5,372.4 606.5,371.2 613.5,371.3 620.5,366.8 627.5,361.3 634.5,361.3 641.5,343.4 648.5,329.2 655.5,330.3 662.5,345.2 669.5,345.2 676.5,348.0 683.5,348.0 690.5,354.4 697.5,354.3 704.5,340.6 711.5,351.0 718.5,365.3 725.5,365.3 732.5,373.6 739.5,373.4 746.5,360.7 753.5,343.8 760.5,335.3 767.5,327.0 774.5,312.5 781.5,299.7 788.5,282.1 795.5,262.8 802.5,257.7 809.5,257.7 816.5,260.1 823.5,259.8 830.5,233.9 837.5,240.0 844.5,235.0 851.5,235.1 858.5,215.6 865.5,239.1 872.5,239.1 879.5,223.8 886.5,202.3 893.5,199.0 900.5,199.0 907.5,215.9 914.5,215.9 921.5,206.1 928.5,215.1 935.5,227.9 942.5,221.2 949.5,233.0 956.5,233.0 963.5,215.4 970.5,215.4 977.5,215.4 984.5,215.3 991.5,230.9 998.5,230.9 1005.5,230.9 1012.5,230.9" fill="none" stroke="#e3b857" stroke-width="1.2" stroke-linejoin="round"/><path d="M51.9 415.2h3.2v5h3.4L53.5 425.2L48.5 420.2h3.4z" fill="#00cf8a"/><path d="M51.9 420.8h3.2v5h3.4L53.5 430.8L48.5 425.8h3.4z" fill="#00cf8a"/><path d="M65.9 412.4h3.2v5h3.4L67.5 422.4L62.5 417.4h3.4z" fill="#00cf8a"/><path d="M86.9 407.8h3.2v5h3.4L88.5 417.8L83.5 412.8h3.4z" fill="#00cf8a"/><path d="M128.9 397.3h3.2v5h3.4L130.5 407.3L125.5 402.3h3.4z" fill="#00cf8a"/><path d="M135.9 393.2h3.2v5h3.4L137.5 403.2L132.5 398.2h3.4z" fill="#00cf8a"/><path d="M149.9 404.5h3.2v5h3.4L151.5 414.5L146.5 409.5h3.4z" fill="#00cf8a"/><path d="M163.9 412.8h3.2v5h3.4L165.5 422.8L160.5 417.8h3.4z" fill="#00cf8a"/><path d="M177.9 420.4h3.2v5h3.4L179.5 430.4L174.5 425.4h3.4z" fill="#00cf8a"/><path d="M205.9 426.6h3.2v5h3.4L207.5 436.6L202.5 431.6h3.4z" fill="#00cf8a"/><path d="M219.9 418.3h3.2v5h3.4L221.5 428.3L216.5 423.3h3.4z" fill="#00cf8a"/><path d="M240.9 415.8h3.2v5h3.4L242.5 425.8L237.5 420.8h3.4z" fill="#00cf8a"/><path d="M282.9 366.3h3.2v5h3.4L284.5 376.3L279.5 371.3h3.4z" fill="#00cf8a"/><path d="M289.9 381.1h3.2v5h3.4L291.5 391.1L286.5 386.1h3.4z" fill="#00cf8a"/><path d="M303.9 376.5h3.2v5h3.4L305.5 386.5L300.5 381.5h3.4z" fill="#00cf8a"/><path d="M324.9 381h3.2v5h3.4L326.5 391L321.5 386h3.4z" fill="#00cf8a"/><path d="M338.9 383.1h3.2v5h3.4L340.5 393.1L335.5 388.1h3.4z" fill="#00cf8a"/><path d="M345.9 393.6h3.2v5h3.4L347.5 403.6L342.5 398.6h3.4z" fill="#00cf8a"/><path d="M366.9 392.2h3.2v5h3.4L368.5 402.2L363.5 397.2h3.4z" fill="#00cf8a"/><path d="M373.9 390.3h3.2v5h3.4L375.5 400.3L370.5 395.3h3.4z" fill="#00cf8a"/><path d="M380.9 391.4h3.2v5h3.4L382.5 401.4L377.5 396.4h3.4z" fill="#00cf8a"/><path d="M401.9 373.4h3.2v5h3.4L403.5 383.4L398.5 378.4h3.4z" fill="#00cf8a"/><path d="M415.9 364.2h3.2v5h3.4L417.5 374.2L412.5 369.2h3.4z" fill="#00cf8a"/><path d="M429.9 362h3.2v5h3.4L431.5 372L426.5 367h3.4z" fill="#00cf8a"/><path d="M436.9 363.2h3.2v5h3.4L438.5 373.2L433.5 368.2h3.4z" fill="#00cf8a"/><path d="M457.9 378.8h3.2v5h3.4L459.5 388.8L454.5 383.8h3.4z" fill="#00cf8a"/><path d="M471.9 377.3h3.2v5h3.4L473.5 387.3L468.5 382.3h3.4z" fill="#00cf8a"/><path d="M485.9 372.1h3.2v5h3.4L487.5 382.1L482.5 377.1h3.4z" fill="#00cf8a"/><path d="M492.9 378.8h3.2v5h3.4L494.5 388.8L489.5 383.8h3.4z" fill="#00cf8a"/><path d="M506.9 388.7h3.2v5h3.4L508.5 398.7L503.5 393.7h3.4z" fill="#00cf8a"/><path d="M513.9 390.8h3.2v5h3.4L515.5 400.8L510.5 395.8h3.4z" fill="#00cf8a"/><path d="M541.9 368.4h3.2v5h3.4L543.5 378.4L538.5 373.4h3.4z" fill="#00cf8a"/><path d="M548.9 360.6h3.2v5h3.4L550.5 370.6L545.5 365.6h3.4z" fill="#00cf8a"/><path d="M555.9 365.5h3.2v5h3.4L557.5 375.5L552.5 370.5h3.4z" fill="#00cf8a"/><path d="M590.9 357.3h3.2v5h3.4L592.5 367.3L587.5 362.3h3.4z" fill="#00cf8a"/><path d="M604.9 356.2h3.2v5h3.4L606.5 366.2L601.5 361.2h3.4z" fill="#00cf8a"/><path d="M618.9 351.8h3.2v5h3.4L620.5 361.8L615.5 356.8h3.4z" fill="#00cf8a"/><path d="M625.9 346.3h3.2v5h3.4L627.5 356.3L622.5 351.3h3.4z" fill="#00cf8a"/><path d="M639.9 328.4h3.2v5h3.4L641.5 338.4L636.5 333.4h3.4z" fill="#00cf8a"/><path d="M646.9 314.2h3.2v5h3.4L648.5 324.2L643.5 319.2h3.4z" fill="#00cf8a"/><path d="M653.9 315.3h3.2v5h3.4L655.5 325.3L650.5 320.3h3.4z" fill="#00cf8a"/><path d="M660.9 330.2h3.2v5h3.4L662.5 340.2L657.5 335.2h3.4z" fill="#00cf8a"/><path d="M674.9 333h3.2v5h3.4L676.5 343L671.5 338h3.4z" fill="#00cf8a"/><path d="M688.9 339.4h3.2v5h3.4L690.5 349.4L685.5 344.4h3.4z" fill="#00cf8a"/><path d="M709.9 336h3.2v5h3.4L711.5 346L706.5 341h3.4z" fill="#00cf8a"/><path d="M716.9 350.3h3.2v5h3.4L718.5 360.3L713.5 355.3h3.4z" fill="#00cf8a"/><path d="M730.9 358.6h3.2v5h3.4L732.5 368.6L727.5 363.6h3.4z" fill="#00cf8a"/><path d="M751.9 328.8h3.2v5h3.4L753.5 338.8L748.5 333.8h3.4z" fill="#00cf8a"/><path d="M758.9 320.3h3.2v5h3.4L760.5 330.3L755.5 325.3h3.4z" fill="#00cf8a"/><path d="M765.9 312h3.2v5h3.4L767.5 322L762.5 317h3.4z" fill="#00cf8a"/><path d="M779.9 284.7h3.2v5h3.4L781.5 294.7L776.5 289.7h3.4z" fill="#00cf8a"/><path d="M800.9 242.7h3.2v5h3.4L802.5 252.7L797.5 247.7h3.4z" fill="#00cf8a"/><path d="M814.9 245.1h3.2v5h3.4L816.5 255.1L811.5 250.1h3.4z" fill="#00cf8a"/><path d="M828.9 218.9h3.2v5h3.4L830.5 228.9L825.5 223.9h3.4z" fill="#00cf8a"/><path d="M835.9 225h3.2v5h3.4L837.5 235L832.5 230h3.4z" fill="#00cf8a"/><path d="M842.9 220h3.2v5h3.4L844.5 230L839.5 225h3.4z" fill="#00cf8a"/><path d="M863.9 224.1h3.2v5h3.4L865.5 234.1L860.5 229.1h3.4z" fill="#00cf8a"/><path d="M877.9 208.8h3.2v5h3.4L879.5 218.8L874.5 213.8h3.4z" fill="#00cf8a"/><path d="M891.9 184h3.2v5h3.4L893.5 194L888.5 189h3.4z" fill="#00cf8a"/><path d="M905.9 200.9h3.2v5h3.4L907.5 210.9L902.5 205.9h3.4z" fill="#00cf8a"/><path d="M919.9 191.1h3.2v5h3.4L921.5 201.1L916.5 196.1h3.4z" fill="#00cf8a"/><path d="M926.9 200.1h3.2v5h3.4L928.5 210.1L923.5 205.1h3.4z" fill="#00cf8a"/><path d="M933.9 212.9h3.2v5h3.4L935.5 222.9L930.5 217.9h3.4z" fill="#00cf8a"/><path d="M940.9 206.2h3.2v5h3.4L942.5 216.2L937.5 211.2h3.4z" fill="#00cf8a"/><path d="M947.9 218h3.2v5h3.4L949.5 228L944.5 223h3.4z" fill="#00cf8a"/><path d="M961.9 200.4h3.2v5h3.4L963.5 210.4L958.5 205.4h3.4z" fill="#00cf8a"/><path d="M989.9 215.9h3.2v5h3.4L991.5 225.9L986.5 220.9h3.4z" fill="#00cf8a"/><path d="M51.9 451h3.2v-5h3.4L53.5 441L48.5 446h3.4z" fill="#ff3a3a"/><path d="M58.9 445.1h3.2v-5h3.4L60.5 435.1L55.5 440.1h3.4z" fill="#ff3a3a"/><path d="M72.9 442.4h3.2v-5h3.4L74.5 432.4L69.5 437.4h3.4z" fill="#ff3a3a"/><path d="M79.9 432.4h3.2v-5h3.4L81.5 422.4L76.5 427.4h3.4z" fill="#ff3a3a"/><path d="M114.9 437.7h3.2v-5h3.4L116.5 427.7L111.5 432.7h3.4z" fill="#ff3a3a"/><path d="M128.9 427.3h3.2v-5h3.4L130.5 417.3L125.5 422.3h3.4z" fill="#ff3a3a"/><path d="M142.9 423.3h3.2v-5h3.4L144.5 413.3L139.5 418.3h3.4z" fill="#ff3a3a"/><path d="M149.9 434.5h3.2v-5h3.4L151.5 424.5L146.5 429.5h3.4z" fill="#ff3a3a"/><path d="M156.9 423.5h3.2v-5h3.4L158.5 413.5L153.5 418.5h3.4z" fill="#ff3a3a"/><path d="M170.9 442.8h3.2v-5h3.4L172.5 432.8L167.5 437.8h3.4z" fill="#ff3a3a"/><path d="M198.9 450.5h3.2v-5h3.4L200.5 440.5L195.5 445.5h3.4z" fill="#ff3a3a"/><path d="M212.9 456.6h3.2v-5h3.4L214.5 446.6L209.5 451.6h3.4z" fill="#ff3a3a"/><path d="M233.9 448.6h3.2v-5h3.4L235.5 438.6L230.5 443.6h3.4z" fill="#ff3a3a"/><path d="M254.9 445.9h3.2v-5h3.4L256.5 435.9L251.5 440.9h3.4z" fill="#ff3a3a"/><path d="M275.9 412.9h3.2v-5h3.4L277.5 402.9L272.5 407.9h3.4z" fill="#ff3a3a"/><path d="M289.9 411.1h3.2v-5h3.4L291.5 401.1L286.5 406.1h3.4z" fill="#ff3a3a"/><path d="M296.9 401h3.2v-5h3.4L298.5 391L293.5 396h3.4z" fill="#ff3a3a"/><path d="M317.9 406.5h3.2v-5h3.4L319.5 396.5L314.5 401.5h3.4z" fill="#ff3a3a"/><path d="M331.9 410.9h3.2v-5h3.4L333.5 400.9L328.5 405.9h3.4z" fill="#ff3a3a"/><path d="M338.9 413.1h3.2v-5h3.4L340.5 403.1L335.5 408.1h3.4z" fill="#ff3a3a"/><path d="M359.9 423.5h3.2v-5h3.4L361.5 413.5L356.5 418.5h3.4z" fill="#ff3a3a"/><path d="M366.9 422.2h3.2v-5h3.4L368.5 412.2L363.5 417.2h3.4z" fill="#ff3a3a"/><path d="M373.9 420.3h3.2v-5h3.4L375.5 410.3L370.5 415.3h3.4z" fill="#ff3a3a"/><path d="M387.9 421.4h3.2v-5h3.4L389.5 411.4L384.5 416.4h3.4z" fill="#ff3a3a"/><path d="M394.9 410.5h3.2v-5h3.4L396.5 400.5L391.5 405.5h3.4z" fill="#ff3a3a"/><path d="M408.9 403.1h3.2v-5h3.4L410.5 393.1L405.5 398.1h3.4z" fill="#ff3a3a"/><path d="M422.9 394.2h3.2v-5h3.4L424.5 384.2L419.5 389.2h3.4z" fill="#ff3a3a"/><path d="M429.9 392h3.2v-5h3.4L431.5 382L426.5 387h3.4z" fill="#ff3a3a"/><path d="M450.9 393.3h3.2v-5h3.4L452.5 383.3L447.5 388.3h3.4z" fill="#ff3a3a"/><path d="M464.9 408.9h3.2v-5h3.4L466.5 398.9L461.5 403.9h3.4z" fill="#ff3a3a"/><path d="M478.9 407.3h3.2v-5h3.4L480.5 397.3L475.5 402.3h3.4z" fill="#ff3a3a"/><path d="M485.9 402.1h3.2v-5h3.4L487.5 392.1L482.5 397.1h3.4z" fill="#ff3a3a"/><path d="M499.9 408.8h3.2v-5h3.4L501.5 398.8L496.5 403.8h3.4z" fill="#ff3a3a"/><path d="M506.9 418.7h3.2v-5h3.4L508.5 408.7L503.5 413.7h3.4z" fill="#ff3a3a"/><path d="M527.9 420.8h3.2v-5h3.4L529.5 410.8L524.5 415.8h3.4z" fill="#ff3a3a"/><path d="M534.9 409.7h3.2v-5h3.4L536.5 399.7L531.5 404.7h3.4z" fill="#ff3a3a"/><path d="M548.9 390.6h3.2v-5h3.4L550.5 380.6L545.5 385.6h3.4z" fill="#ff3a3a"/><path d="M576.9 395.6h3.2v-5h3.4L578.5 385.6L573.5 390.6h3.4z" fill="#ff3a3a"/><path d="M583.9 383.3h3.2v-5h3.4L585.5 373.3L580.5 378.3h3.4z" fill="#ff3a3a"/><path d="M597.9 387.4h3.2v-5h3.4L599.5 377.4L594.5 382.4h3.4z" fill="#ff3a3a"/><path d="M611.9 386.3h3.2v-5h3.4L613.5 376.3L608.5 381.3h3.4z" fill="#ff3a3a"/><path d="M618.9 381.8h3.2v-5h3.4L620.5 371.8L615.5 376.8h3.4z" fill="#ff3a3a"/><path d="M632.9 376.3h3.2v-5h3.4L634.5 366.3L629.5 371.3h3.4z" fill="#ff3a3a"/><path d="M646.9 344.2h3.2v-5h3.4L648.5 334.2L643.5 339.2h3.4z" fill="#ff3a3a"/><path d="M653.9 345.3h3.2v-5h3.4L655.5 335.3L650.5 340.3h3.4z" fill="#ff3a3a"/><path d="M667.9 360.2h3.2v-5h3.4L669.5 350.2L664.5 355.2h3.4z" fill="#ff3a3a"/><path d="M681.9 363h3.2v-5h3.4L683.5 353L678.5 358h3.4z" fill="#ff3a3a"/><path d="M695.9 369.3h3.2v-5h3.4L697.5 359.3L692.5 364.3h3.4z" fill="#ff3a3a"/><path d="M709.9 366h3.2v-5h3.4L711.5 356L706.5 361h3.4z" fill="#ff3a3a"/><path d="M723.9 380.3h3.2v-5h3.4L725.5 370.3L720.5 375.3h3.4z" fill="#ff3a3a"/><path d="M737.9 388.4h3.2v-5h3.4L739.5 378.4L734.5 383.4h3.4z" fill="#ff3a3a"/><path d="M744.9 375.7h3.2v-5h3.4L746.5 365.7L741.5 370.7h3.4z" fill="#ff3a3a"/><path d="M758.9 350.3h3.2v-5h3.4L760.5 340.3L755.5 345.3h3.4z" fill="#ff3a3a"/><path d="M765.9 342h3.2v-5h3.4L767.5 332L762.5 337h3.4z" fill="#ff3a3a"/><path d="M772.9 327.5h3.2v-5h3.4L774.5 317.5L769.5 322.5h3.4z" fill="#ff3a3a"/><path d="M793.9 277.8h3.2v-5h3.4L795.5 267.8L790.5 272.8h3.4z" fill="#ff3a3a"/><path d="M807.9 272.7h3.2v-5h3.4L809.5 262.7L804.5 267.7h3.4z" fill="#ff3a3a"/><path d="M821.9 274.8h3.2v-5h3.4L823.5 264.8L818.5 269.8h3.4z" fill="#ff3a3a"/><path d="M835.9 255h3.2v-5h3.4L837.5 245L832.5 250h3.4z" fill="#ff3a3a"/><path d="M849.9 250.1h3.2v-5h3.4L851.5 240.1L846.5 245.1h3.4z" fill="#ff3a3a"/><path d="M856.9 230.6h3.2v-5h3.4L858.5 220.6L853.5 225.6h3.4z" fill="#ff3a3a"/><path d="M870.9 254.1h3.2v-5h3.4L872.5 244.1L867.5 249.1h3.4z" fill="#ff3a3a"/><path d="M884.9 217.3h3.2v-5h3.4L886.5 207.3L881.5 212.3h3.4z" fill="#ff3a3a"/><path d="M898.9 214h3.2v-5h3.4L900.5 204L895.5 209h3.4z" fill="#ff3a3a"/><path d="M912.9 230.9h3.2v-5h3.4L914.5 220.9L909.5 225.9h3.4z" fill="#ff3a3a"/><path d="M926.9 230.1h3.2v-5h3.4L928.5 220.1L923.5 225.1h3.4z" fill="#ff3a3a"/><path d="M933.9 242.9h3.2v-5h3.4L935.5 232.9L930.5 237.9h3.4z" fill="#ff3a3a"/><path d="M940.9 236.2h3.2v-5h3.4L942.5 226.2L937.5 231.2h3.4z" fill="#ff3a3a"/><path d="M954.9 248h3.2v-5h3.4L956.5 238L951.5 243h3.4z" fill="#ff3a3a"/><path d="M982.9 230.3h3.2v-5h3.4L984.5 220.3L979.5 225.3h3.4z" fill="#ff3a3a"/><path d="M1010.9 245.9h3.2v-5h3.4L1012.5 235.9L1007.5 240.9h3.4z" fill="#ff3a3a"/></g><polyline points="53.5,567.4 60.5,561.9 67.5,563.2 74.5,564.6 81.5,563.3 88.5,565.0 95.5,566.6 102.5,557.1 109.5,558.3 116.5,557.1 123.5,556.6 130.5,560.5 137.5,566.3 144.5,564.1 151.5,564.5 158.5,565.8 165.5,564.3 172.5,565.9 179.5,568.7 186.5,568.7 193.5,569.1 200.5,571.2 207.5,597.7 214.5,591.6 221.5,587.9 228.5,583.5 235.5,582.0 242.5,581.2 249.5,580.7 256.5,579.9 263.5,579.9 270.5,579.9 277.5,578.9 284.5,578.9 291.5,578.7 298.5,578.7 305.5,578.7 312.5,579.0 319.5,579.7 326.5,580.3 333.5,576.1 340.5,573.6 347.5,571.8 354.5,572.5 361.5,568.4 368.5,567.7 375.5,563.2 382.5,566.3 389.5,568.4 396.5,569.7 403.5,567.6 410.5,565.8 417.5,566.1 424.5,569.4 431.5,571.7 438.5,573.5 445.5,573.6 452.5,571.3 459.5,573.5 466.5,572.2 473.5,570.5 480.5,569.7 487.5,570.0 494.5,568.9 501.5,570.9 508.5,567.6 515.5,568.1 522.5,571.0 529.5,570.0 536.5,570.4 543.5,569.9 550.5,573.1 557.5,572.6 564.5,571.6 571.5,567.1 578.5,561.4 585.5,563.0 592.5,565.6 599.5,564.0 606.5,563.3 613.5,563.3 620.5,560.9 627.5,559.4 634.5,561.5 641.5,557.6 648.5,558.6 655.5,556.8 662.5,556.5 669.5,556.1 676.5,556.0 683.5,557.3 690.5,554.0 697.5,551.5 704.5,548.8 711.5,546.1 718.5,546.1 725.5,543.2 732.5,545.5 739.5,544.5 746.5,542.9 753.5,542.9 760.5,550.2 767.5,552.7 774.5,550.7 781.5,547.7 788.5,546.7 795.5,546.7 802.5,547.8 809.5,545.6 816.5,543.1 823.5,540.3 830.5,540.9 837.5,538.0 844.5,534.4 851.5,536.3 858.5,531.4 865.5,529.5 872.5,520.5 879.5,511.9 886.5,513.4 893.5,520.5 900.5,512.8 907.5,509.5 914.5,506.9 921.5,509.8 928.5,512.8 935.5,522.1 942.5,513.1 949.5,512.3 956.5,515.5 963.5,514.4 970.5,504.4 977.5,507.4 984.5,506.1 991.5,507.0 998.5,504.4 1005.5,509.5 1012.5,509.0" fill="none" stroke="#ee8f64" stroke-width="1.2" stroke-linejoin="round" clip-path="url(#c2)"/><line x1="50" y1="669.5" x2="1016" y2="669.5" stroke="#3a3c40" stroke-width="1"/><rect x="1015.5" y="668.5" width="5" height="2" fill="#3c3d40"/><rect x="51.5" y="658.9" width="4" height="10.9" fill="#10171a" stroke="#f7646c" stroke-width="1"/><rect x="58" y="668.8" width="4.6" height="1.4" fill="#2fe6d2"/><rect x="65.5" y="665.1" width="4" height="4.7" fill="#10171a" stroke="#f7646c" stroke-width="1"/><rect x="72" y="668.8" width="4.6" height="1.4" fill="#2fe6d2"/><rect x="79.5" y="651.7" width="4" height="18.1" fill="#10171a" stroke="#f7646c" stroke-width="1"/><rect x="86" y="669.0" width="5" height="10.3" fill="#2fe6d2"/><rect x="93" y="668.8" width="4.6" height="1.4" fill="#1e8fff"/><rect x="100" y="668.8" width="4.6" height="1.4" fill="#1e8fff"/><rect x="107" y="668.8" width="4.6" height="1.4" fill="#1e8fff"/><rect x="114" y="668.8" width="4.6" height="1.4" fill="#2fe6d2"/><rect x="121.5" y="650.9" width="4" height="18.9" fill="#10171a" stroke="#f7646c" stroke-width="1"/><rect x="128" y="668.8" width="4.6" height="1.4" fill="#2fe6d2"/><rect x="135.5" y="662.6" width="4" height="7.2" fill="#10171a" stroke="#f7646c" stroke-width="1"/><rect x="142" y="668.8" width="4.6" height="1.4" fill="#2fe6d2"/><rect x="149" y="669.0" width="5" height="21" fill="#2fe6d2"/><rect x="156.5" y="649.9" width="4" height="19.9" fill="#10171a" stroke="#f7646c" stroke-width="1"/><rect x="163" y="669.0" width="5" height="35.7" fill="#2fe6d2"/><rect x="170" y="668.8" width="4.6" height="1.4" fill="#2fe6d2"/><rect x="177" y="669.0" width="5" height="14.4" fill="#2fe6d2"/><rect x="184" y="668.8" width="4.6" height="1.4" fill="#1e8fff"/><rect x="191" y="668.8" width="4.6" height="1.4" fill="#1e8fff"/><rect x="198" y="668.8" width="4.6" height="1.4" fill="#2fe6d2"/><rect x="205" y="669.0" width="5" height="11.6" fill="#2fe6d2"/><rect x="212" y="668.8" width="4.6" height="1.4" fill="#2fe6d2"/><rect x="219.5" y="654.9" width="4" height="14.9" fill="#10171a" stroke="#f7646c" stroke-width="1"/><rect x="226" y="668.8" width="4.6" height="1.4" fill="#1e8fff"/><rect x="233" y="668.8" width="4.6" height="1.4" fill="#2fe6d2"/><rect x="240.5" y="664.8" width="4" height="5" fill="#10171a" stroke="#f7646c" stroke-width="1"/><rect x="247" y="668.8" width="4.6" height="1.4" fill="#1e8fff"/><rect x="254" y="668.8" width="4.6" height="1.4" fill="#2fe6d2"/><rect x="261.5" y="651.7" width="4" height="18.1" fill="#10171a" stroke="#f7646c" stroke-width="1"/><rect x="268.5" y="649.9" width="4" height="19.9" fill="#10171a" stroke="#f7646c" stroke-width="1"/><rect x="275.5" y="647.9" width="4" height="21.9" fill="#10171a" stroke="#f7646c" stroke-width="1"/><rect x="282.5" y="639.7" width="4" height="30.1" fill="#10171a" stroke="#f7646c" stroke-width="1"/><rect x="289" y="669.0" width="5" height="27.5" fill="#2fe6d2"/><rect x="296.5" y="651.7" width="4" height="18.1" fill="#10171a" stroke="#f7646c" stroke-width="1"/><rect x="303" y="669.0" width="5" height="10.5" fill="#2fe6d2"/><rect x="310" y="668.8" width="4.6" height="1.4" fill="#1e8fff"/><rect x="317" y="668.8" width="4.6" height="1.4" fill="#2fe6d2"/><rect x="324" y="669.0" width="5" height="8.7" fill="#2fe6d2"/><rect x="331" y="668.8" width="4.6" height="1.4" fill="#2fe6d2"/><rect x="338" y="669.0" width="5" height="4.6" fill="#2fe6d2"/><rect x="345" y="669.0" width="5" height="19.6" fill="#2fe6d2"/><rect x="352" y="668.8" width="4.6" height="1.4" fill="#1e8fff"/><rect x="359" y="668.8" width="4.6" height="1.4" fill="#2fe6d2"/><rect x="366.5" y="667.5" width="4" height="2.3" fill="#10171a" stroke="#f7646c" stroke-width="1"/><rect x="373.5" y="666.4" width="4" height="3.4" fill="#10171a" stroke="#f7646c" stroke-width="1"/><rect x="380" y="669.0" width="5" height="2.5" fill="#2fe6d2"/><rect x="387" y="668.8" width="4.6" height="1.4" fill="#2fe6d2"/><rect x="394.5" y="649.9" width="4" height="19.9" fill="#10171a" stroke="#f7646c" stroke-width="1"/><rect x="401.5" y="656.9" width="4" height="12.9" fill="#10171a" stroke="#f7646c" stroke-width="1"/><rect x="408" y="668.0" width="5" height="1.2" fill="#f7646c"/><rect x="415.5" y="653.6" width="4" height="16.2" fill="#10171a" stroke="#f7646c" stroke-width="1"/><rect x="422" y="668.8" width="4.6" height="1.4" fill="#2fe6d2"/><rect x="429.5" y="665.9" width="4" height="3.9" fill="#10171a" stroke="#f7646c" stroke-width="1"/><rect x="436" y="669.0" width="5" height="2.6" fill="#2fe6d2"/><rect x="443" y="668.8" width="4.6" height="1.4" fill="#1e8fff"/><rect x="450" y="668.8" width="4.6" height="1.4" fill="#2fe6d2"/><rect x="457" y="669.0" width="5" height="28.8" fill="#2fe6d2"/><rect x="464" y="668.8" width="4.6" height="1.4" fill="#2fe6d2"/><rect x="471.5" y="667.1" width="4" height="2.7" fill="#10171a" stroke="#f7646c" stroke-width="1"/><rect x="478" y="668.8" width="4.6" height="1.4" fill="#2fe6d2"/><rect x="485.5" y="660.7" width="4" height="9.1" fill="#10171a" stroke="#f7646c" stroke-width="1"/><rect x="492" y="669.0" width="5" height="12.8" fill="#2fe6d2"/><rect x="499" y="668.8" width="4.6" height="1.4" fill="#2fe6d2"/><rect x="506" y="669.0" width="5" height="18.7" fill="#2fe6d2"/><rect x="513" y="669.0" width="5" height="4.3" fill="#2fe6d2"/><rect x="520" y="668.8" width="4.6" height="1.4" fill="#1e8fff"/><rect x="527" y="668.8" width="4.6" height="1.4" fill="#2fe6d2"/><rect x="534.5" y="649.9" width="4" height="19.9" fill="#10171a" stroke="#f7646c" stroke-width="1"/><rect x="541.5" y="649.5" width="4" height="20.3" fill="#10171a" stroke="#f7646c" stroke-width="1"/><rect x="548.5" y="655.8" width="4" height="14" fill="#10171a" stroke="#f7646c" stroke-width="1"/><rect x="555" y="669.0" width="5" height="9.5" fill="#2fe6d2"/><rect x="562" y="668.8" width="4.6" height="1.4" fill="#1e8fff"/><rect x="569" y="668.8" width="4.6" height="1.4" fill="#1e8fff"/><rect x="576" y="668.8" width="4.6" height="1.4" fill="#2fe6d2"/><rect x="583.5" y="647.6" width="4" height="22.2" fill="#10171a" stroke="#f7646c" stroke-width="1"/><rect x="590" y="669.0" width="5" height="7.5" fill="#2fe6d2"/><rect x="597" y="668.8" width="4.6" height="1.4" fill="#2fe6d2"/><rect x="604.5" y="667.9" width="4" height="1.9" fill="#10171a" stroke="#f7646c" stroke-width="1"/><rect x="611" y="668.8" width="4.6" height="1.4" fill="#2fe6d2"/><rect x="618.5" y="661.8" width="4" height="8" fill="#10171a" stroke="#f7646c" stroke-width="1"/><rect x="625.5" y="659.9" width="4" height="9.9" fill="#10171a" stroke="#f7646c" stroke-width="1"/><rect x="632" y="668.8" width="4.6" height="1.4" fill="#2fe6d2"/><rect x="639.5" y="637.3" width="4" height="32.5" fill="#10171a" stroke="#f7646c" stroke-width="1"/><rect x="646.5" y="643.8" width="4" height="26" fill="#10171a" stroke="#f7646c" stroke-width="1"/><rect x="653" y="669.0" width="5" height="2.5" fill="#2fe6d2"/><rect x="660" y="669.0" width="5" height="27.8" fill="#2fe6d2"/><rect x="667" y="668.8" width="4.6" height="1.4" fill="#2fe6d2"/><rect x="674" y="669.0" width="5" height="5.7" fill="#2fe6d2"/><rect x="681" y="668.8" width="4.6" height="1.4" fill="#2fe6d2"/><rect x="688" y="669.0" width="5" height="12.1" fill="#2fe6d2"/><rect x="695" y="668.8" width="4.6" height="1.4" fill="#2fe6d2"/><rect x="702.5" y="645" width="4" height="24.8" fill="#10171a" stroke="#f7646c" stroke-width="1"/><rect x="709" y="669.0" width="5" height="19.6" fill="#2fe6d2"/><rect x="716" y="669.0" width="5" height="26.7" fill="#2fe6d2"/><rect x="723" y="668.8" width="4.6" height="1.4" fill="#2fe6d2"/><rect x="730" y="669.0" width="5" height="15.7" fill="#2fe6d2"/><rect x="737" y="668.8" width="4.6" height="1.4" fill="#2fe6d2"/><rect x="744.5" y="646.8" width="4" height="23" fill="#10171a" stroke="#f7646c" stroke-width="1"/><rect x="751.5" y="639.2" width="4" height="30.6" fill="#10171a" stroke="#f7646c" stroke-width="1"/><rect x="758.5" y="654.5" width="4" height="15.3" fill="#10171a" stroke="#f7646c" stroke-width="1"/><rect x="765.5" y="654.8" width="4" height="15" fill="#10171a" stroke="#f7646c" stroke-width="1"/><rect x="772.5" y="643.5" width="4" height="26.3" fill="#10171a" stroke="#f7646c" stroke-width="1"/><rect x="779.5" y="646.8" width="4" height="23" fill="#10171a" stroke="#f7646c" stroke-width="1"/><rect x="786.5" y="637.8" width="4" height="32" fill="#10171a" stroke="#f7646c" stroke-width="1"/><rect x="793.5" y="634.8" width="4" height="35" fill="#10171a" stroke="#f7646c" stroke-width="1"/><rect x="800.5" y="660.7" width="4" height="9.1" fill="#10171a" stroke="#f7646c" stroke-width="1"/><rect x="807" y="668.8" width="4.6" height="1.4" fill="#2fe6d2"/><rect x="814" y="669.0" width="5" height="4.9" fill="#2fe6d2"/><rect x="821" y="668.0" width="5" height="1.2" fill="#f7646c"/><rect x="828.5" y="623" width="4" height="46.8" fill="#10171a" stroke="#f7646c" stroke-width="1"/><rect x="835" y="669.0" width="5" height="11.6" fill="#2fe6d2"/><rect x="842.5" y="660.7" width="4" height="9.1" fill="#10171a" stroke="#f7646c" stroke-width="1"/><rect x="849" y="668.8" width="4.6" height="1.4" fill="#2fe6d2"/><rect x="856.5" y="634.3" width="4" height="35.5" fill="#10171a" stroke="#f7646c" stroke-width="1"/><rect x="863" y="669.0" width="5" height="43.5" fill="#2fe6d2"/><rect x="870" y="668.8" width="4.6" height="1.4" fill="#2fe6d2"/><rect x="877.5" y="641.9" width="4" height="27.9" fill="#10171a" stroke="#f7646c" stroke-width="1"/><rect x="884.5" y="630.7" width="4" height="39.1" fill="#10171a" stroke="#f7646c" stroke-width="1"/><rect x="891.5" y="663.9" width="4" height="5.9" fill="#10171a" stroke="#f7646c" stroke-width="1"/><rect x="898" y="668.8" width="4.6" height="1.4" fill="#2fe6d2"/><rect x="905" y="669.0" width="5" height="31.3" fill="#2fe6d2"/><rect x="912" y="668.8" width="4.6" height="1.4" fill="#2fe6d2"/><rect x="919.5" y="652" width="4" height="17.8" fill="#10171a" stroke="#f7646c" stroke-width="1"/><rect x="926" y="669.0" width="5" height="16.9" fill="#2fe6d2"/><rect x="933" y="669.0" width="5" height="23.6" fill="#2fe6d2"/><rect x="940.5" y="657.7" width="4" height="12.1" fill="#10171a" stroke="#f7646c" stroke-width="1"/><rect x="947" y="669.0" width="5" height="21.9" fill="#2fe6d2"/><rect x="954" y="668.8" width="4.6" height="1.4" fill="#2fe6d2"/><rect x="961.5" y="637.8" width="4" height="32" fill="#10171a" stroke="#f7646c" stroke-width="1"/><rect x="968" y="668.8" width="4.6" height="1.4" fill="#1e8fff"/><rect x="975" y="668.8" width="4.6" height="1.4" fill="#1e8fff"/><rect x="982" y="668.8" width="4.6" height="1.4" fill="#2fe6d2"/><rect x="989" y="669.0" width="5" height="28.8" fill="#2fe6d2"/><rect x="996" y="668.8" width="4.6" height="1.4" fill="#1e8fff"/><rect x="1003" y="668.8" width="4.6" height="1.4" fill="#1e8fff"/><rect x="1010" y="668.8" width="4.6" height="1.4" fill="#2fe6d2"/><g clip-path="url(#c4)"><line x1="50" y1="788.1" x2="1016" y2="788.1" stroke="#3a3c40" stroke-width="1"/><rect x="1015.5" y="787.1" width="5" height="2" fill="#3c3d40"/><rect x="58" y="787.3000000000001" width="4.6" height="1.6" fill="#1e8fff"/><rect x="72" y="787.3000000000001" width="4.6" height="1.6" fill="#1e8fff"/><rect x="79" y="787.3000000000001" width="4.6" height="1.6" fill="#1e8fff"/><rect x="93" y="787.3000000000001" width="4.6" height="1.6" fill="#1e8fff"/><rect x="100" y="787.3000000000001" width="4.6" height="1.6" fill="#1e8fff"/><rect x="107" y="787.3000000000001" width="4.6" height="1.6" fill="#1e8fff"/><rect x="114" y="787.3000000000001" width="4.6" height="1.6" fill="#1e8fff"/><rect x="121" y="787.3000000000001" width="4.6" height="1.6" fill="#1e8fff"/><rect x="142" y="787.3000000000001" width="4.6" height="1.6" fill="#1e8fff"/><rect x="156" y="787.3000000000001" width="4.6" height="1.6" fill="#1e8fff"/><rect x="170" y="787.3000000000001" width="4.6" height="1.6" fill="#1e8fff"/><rect x="184" y="787.3000000000001" width="4.6" height="1.6" fill="#1e8fff"/><rect x="191" y="787.3000000000001" width="4.6" height="1.6" fill="#1e8fff"/><rect x="198" y="787.3000000000001" width="4.6" height="1.6" fill="#1e8fff"/><rect x="212" y="787.3000000000001" width="4.6" height="1.6" fill="#1e8fff"/><rect x="226" y="787.3000000000001" width="4.6" height="1.6" fill="#1e8fff"/><rect x="233" y="787.3000000000001" width="4.6" height="1.6" fill="#1e8fff"/><rect x="247" y="787.3000000000001" width="4.6" height="1.6" fill="#1e8fff"/><rect x="254" y="787.3000000000001" width="4.6" height="1.6" fill="#1e8fff"/><rect x="261" y="787.3000000000001" width="4.6" height="1.6" fill="#1e8fff"/><rect x="268" y="787.3000000000001" width="4.6" height="1.6" fill="#1e8fff"/><rect x="275" y="787.3000000000001" width="4.6" height="1.6" fill="#1e8fff"/><rect x="296" y="787.3000000000001" width="4.6" height="1.6" fill="#1e8fff"/><rect x="310" y="787.3000000000001" width="4.6" height="1.6" fill="#1e8fff"/><rect x="317" y="787.3000000000001" width="4.6" height="1.6" fill="#1e8fff"/><rect x="331" y="787.3000000000001" width="4.6" height="1.6" fill="#1e8fff"/><rect x="352" y="787.3000000000001" width="4.6" height="1.6" fill="#1e8fff"/><rect x="359" y="787.3000000000001" width="4.6" height="1.6" fill="#1e8fff"/><rect x="387" y="787.3000000000001" width="4.6" height="1.6" fill="#1e8fff"/><rect x="394" y="787.3000000000001" width="4.6" height="1.6" fill="#1e8fff"/><rect x="408" y="787.3000000000001" width="4.6" height="1.6" fill="#1e8fff"/><rect x="422" y="787.3000000000001" width="4.6" height="1.6" fill="#1e8fff"/><rect x="443" y="787.3000000000001" width="4.6" height="1.6" fill="#1e8fff"/><rect x="450" y="787.3000000000001" width="4.6" height="1.6" fill="#1e8fff"/><rect x="464" y="787.3000000000001" width="4.6" height="1.6" fill="#1e8fff"/><rect x="478" y="787.3000000000001" width="4.6" height="1.6" fill="#1e8fff"/><rect x="499" y="787.3000000000001" width="4.6" height="1.6" fill="#1e8fff"/><rect x="520" y="787.3000000000001" width="4.6" height="1.6" fill="#1e8fff"/><rect x="527" y="787.3000000000001" width="4.6" height="1.6" fill="#1e8fff"/><rect x="534" y="787.3000000000001" width="4.6" height="1.6" fill="#1e8fff"/><rect x="562" y="787.3000000000001" width="4.6" height="1.6" fill="#1e8fff"/><rect x="569" y="787.3000000000001" width="4.6" height="1.6" fill="#1e8fff"/><rect x="576" y="787.3000000000001" width="4.6" height="1.6" fill="#1e8fff"/><rect x="583" y="787.3000000000001" width="4.6" height="1.6" fill="#1e8fff"/><rect x="597" y="787.3000000000001" width="4.6" height="1.6" fill="#1e8fff"/><rect x="611" y="787.3000000000001" width="4.6" height="1.6" fill="#1e8fff"/><rect x="632" y="787.3000000000001" width="4.6" height="1.6" fill="#1e8fff"/><rect x="667" y="787.3000000000001" width="4.6" height="1.6" fill="#1e8fff"/><rect x="681" y="787.3000000000001" width="4.6" height="1.6" fill="#1e8fff"/><rect x="695" y="787.3000000000001" width="4.6" height="1.6" fill="#1e8fff"/><rect x="702" y="787.3000000000001" width="4.6" height="1.6" fill="#1e8fff"/><rect x="723" y="787.3000000000001" width="4.6" height="1.6" fill="#1e8fff"/><rect x="737" y="787.3000000000001" width="4.6" height="1.6" fill="#1e8fff"/><rect x="744" y="787.3000000000001" width="4.6" height="1.6" fill="#1e8fff"/><rect x="772" y="787.3000000000001" width="4.6" height="1.6" fill="#1e8fff"/><rect x="786" y="787.3000000000001" width="4.6" height="1.6" fill="#1e8fff"/><rect x="793" y="787.3000000000001" width="4.6" height="1.6" fill="#1e8fff"/><rect x="807" y="787.3000000000001" width="4.6" height="1.6" fill="#1e8fff"/><rect x="821" y="787.3000000000001" width="4.6" height="1.6" fill="#1e8fff"/><rect x="849" y="787.3000000000001" width="4.6" height="1.6" fill="#1e8fff"/><rect x="856" y="787.3000000000001" width="4.6" height="1.6" fill="#1e8fff"/><rect x="870" y="787.3000000000001" width="4.6" height="1.6" fill="#1e8fff"/><rect x="884" y="787.3000000000001" width="4.6" height="1.6" fill="#1e8fff"/><rect x="898" y="787.3000000000001" width="4.6" height="1.6" fill="#1e8fff"/><rect x="912" y="787.3000000000001" width="4.6" height="1.6" fill="#1e8fff"/><rect x="954" y="787.3000000000001" width="4.6" height="1.6" fill="#1e8fff"/><rect x="968" y="787.3000000000001" width="4.6" height="1.6" fill="#1e8fff"/><rect x="975" y="787.3000000000001" width="4.6" height="1.6" fill="#1e8fff"/><rect x="982" y="787.3000000000001" width="4.6" height="1.6" fill="#1e8fff"/><rect x="996" y="787.3000000000001" width="4.6" height="1.6" fill="#1e8fff"/><rect x="1003" y="787.3000000000001" width="4.6" height="1.6" fill="#1e8fff"/><rect x="1010" y="787.3000000000001" width="4.6" height="1.6" fill="#1e8fff"/><rect x="51" y="787.3000000000001" width="5" height="12.4" fill="#2fe6d2"/><rect x="65" y="787.3000000000001" width="5" height="12.4" fill="#2fe6d2"/><rect x="86" y="787.3000000000001" width="5" height="23.4" fill="#2fe6d2"/><rect x="128" y="787.3000000000001" width="5" height="13.2" fill="#2fe6d2"/><rect x="135" y="787.3000000000001" width="5" height="12.7" fill="#2fe6d2"/><rect x="149" y="787.3000000000001" width="5" height="11.9" fill="#2fe6d2"/><rect x="163" y="787.3000000000001" width="5" height="22.9" fill="#2fe6d2"/><rect x="177" y="787.3000000000001" width="5" height="22.1" fill="#2fe6d2"/><rect x="205" y="787.3000000000001" width="5" height="21.3" fill="#2fe6d2"/><rect x="219" y="787.3000000000001" width="5" height="21.4" fill="#2fe6d2"/><rect x="240" y="787.3000000000001" width="5" height="11.9" fill="#2fe6d2"/><rect x="282" y="787.3000000000001" width="5" height="12.3" fill="#2fe6d2"/><rect x="289" y="787.3000000000001" width="5" height="15.2" fill="#2fe6d2"/><rect x="303" y="787.3000000000001" width="5" height="27" fill="#2fe6d2"/><rect x="324" y="787.3000000000001" width="5" height="13.6" fill="#2fe6d2"/><rect x="338" y="787.3000000000001" width="5" height="13.6" fill="#2fe6d2"/><rect x="345" y="787.3000000000001" width="5" height="12.4" fill="#2fe6d2"/><rect x="366" y="787.3000000000001" width="5" height="13.2" fill="#2fe6d2"/><rect x="373" y="787.3000000000001" width="5" height="13.2" fill="#2fe6d2"/><rect x="380" y="787.3000000000001" width="5" height="12.7" fill="#2fe6d2"/><rect x="401" y="787.3000000000001" width="5" height="27.5" fill="#2fe6d2"/><rect x="415" y="787.3000000000001" width="5" height="15.5" fill="#2fe6d2"/><rect x="429" y="787.3000000000001" width="5" height="14.9" fill="#2fe6d2"/><rect x="436" y="787.3000000000001" width="5" height="14.5" fill="#2fe6d2"/><rect x="457" y="787.3000000000001" width="5" height="26.7" fill="#2fe6d2"/><rect x="471" y="787.3000000000001" width="5" height="14.4" fill="#2fe6d2"/><rect x="485" y="787.3000000000001" width="5" height="14.5" fill="#2fe6d2"/><rect x="492" y="787.3000000000001" width="5" height="13.6" fill="#2fe6d2"/><rect x="506" y="787.3000000000001" width="5" height="12.7" fill="#2fe6d2"/><rect x="513" y="787.3000000000001" width="5" height="13.6" fill="#2fe6d2"/><rect x="541" y="787.3000000000001" width="5" height="13.6" fill="#2fe6d2"/><rect x="548" y="787.3000000000001" width="5" height="16.5" fill="#2fe6d2"/><rect x="555" y="787.3000000000001" width="5" height="12.7" fill="#2fe6d2"/><rect x="590" y="787.3000000000001" width="5" height="28.3" fill="#2fe6d2"/><rect x="604" y="787.3000000000001" width="5" height="29.1" fill="#2fe6d2"/><rect x="618" y="787.3000000000001" width="5" height="15.5" fill="#2fe6d2"/><rect x="625" y="787.3000000000001" width="5" height="16" fill="#2fe6d2"/><rect x="639" y="787.3000000000001" width="5" height="16.3" fill="#2fe6d2"/><rect x="646" y="787.3000000000001" width="5" height="18.8" fill="#2fe6d2"/><rect x="653" y="787.3000000000001" width="5" height="16" fill="#2fe6d2"/><rect x="660" y="787.3000000000001" width="5" height="15.7" fill="#2fe6d2"/><rect x="674" y="787.3000000000001" width="5" height="16.5" fill="#2fe6d2"/><rect x="688" y="787.3000000000001" width="5" height="15.7" fill="#2fe6d2"/><rect x="709" y="787.3000000000001" width="5" height="16.3" fill="#2fe6d2"/><rect x="716" y="787.3000000000001" width="5" height="14.7" fill="#2fe6d2"/><rect x="730" y="787.3000000000001" width="5" height="28.8" fill="#2fe6d2"/><rect x="751" y="787.3000000000001" width="5" height="16.5" fill="#2fe6d2"/><rect x="758" y="787.3000000000001" width="5" height="17.3" fill="#2fe6d2"/><rect x="765" y="787.3000000000001" width="5" height="17.3" fill="#2fe6d2"/><rect x="779" y="787.3000000000001" width="5" height="16.8" fill="#2fe6d2"/><rect x="800" y="787.3000000000001" width="5" height="41.4" fill="#2fe6d2"/><rect x="814" y="787.3000000000001" width="5" height="40.6" fill="#2fe6d2"/><rect x="828" y="787.3000000000001" width="5" height="21.7" fill="#2fe6d2"/><rect x="835" y="787.3000000000001" width="5" height="22.2" fill="#2fe6d2"/><rect x="842" y="787.3000000000001" width="5" height="22.2" fill="#2fe6d2"/><rect x="863" y="787.3000000000001" width="5" height="43.5" fill="#2fe6d2"/><rect x="877" y="787.3000000000001" width="5" height="21.7" fill="#2fe6d2"/><rect x="891" y="787.3000000000001" width="5" height="47.9" fill="#2fe6d2"/><rect x="905" y="787.3000000000001" width="5" height="45.8" fill="#2fe6d2"/><rect x="919" y="787.3000000000001" width="5" height="22.2" fill="#2fe6d2"/><rect x="926" y="787.3000000000001" width="5" height="24.7" fill="#2fe6d2"/><rect x="933" y="787.3000000000001" width="5" height="21.3" fill="#2fe6d2"/><rect x="940" y="787.3000000000001" width="5" height="23.7" fill="#2fe6d2"/><rect x="947" y="787.3000000000001" width="5" height="21.4" fill="#2fe6d2"/><rect x="961" y="787.3000000000001" width="5" height="45.5" fill="#2fe6d2"/><rect x="989" y="787.3000000000001" width="5" height="44.3" fill="#2fe6d2"/><path d="M58.5 788.7V778h4V788.7" fill="#10171a" stroke="#f7646c" stroke-width="1"/><rect x="58" y="787.3000000000001" width="5" height="1.6" fill="#5a78d8"/><path d="M72.5 788.7V777.6h4V788.7" fill="#10171a" stroke="#f7646c" stroke-width="1"/><rect x="72" y="787.3000000000001" width="5" height="1.6" fill="#5a78d8"/><path d="M79.5 788.7V777.6h4V788.7" fill="#10171a" stroke="#f7646c" stroke-width="1"/><rect x="79" y="787.3000000000001" width="5" height="1.6" fill="#5a78d8"/><path d="M114.5 788.7V777.3h4V788.7" fill="#10171a" stroke="#f7646c" stroke-width="1"/><rect x="114" y="787.3000000000001" width="5" height="1.6" fill="#5a78d8"/><path d="M128.5 788.7V777.3h4V788.7" fill="#10171a" stroke="#f7646c" stroke-width="1"/><rect x="128" y="787.3000000000001" width="5" height="1.6" fill="#5a78d8"/><path d="M142.5 788.7V776.8h4V788.7" fill="#10171a" stroke="#f7646c" stroke-width="1"/><rect x="142" y="787.3000000000001" width="5" height="1.6" fill="#5a78d8"/><path d="M149.5 788.7V776.5h4V788.7" fill="#10171a" stroke="#f7646c" stroke-width="1"/><rect x="149" y="787.3000000000001" width="5" height="1.6" fill="#5a78d8"/><path d="M156.5 788.7V778h4V788.7" fill="#10171a" stroke="#f7646c" stroke-width="1"/><rect x="156" y="787.3000000000001" width="5" height="1.6" fill="#5a78d8"/><path d="M170.5 788.7V767h4V788.7" fill="#10171a" stroke="#f7646c" stroke-width="1"/><rect x="170" y="787.3000000000001" width="5" height="1.6" fill="#5a78d8"/><path d="M198.5 788.7V767.5h4V788.7" fill="#10171a" stroke="#f7646c" stroke-width="1"/><rect x="198" y="787.3000000000001" width="5" height="1.6" fill="#5a78d8"/><path d="M212.5 788.7V769h4V788.7" fill="#10171a" stroke="#f7646c" stroke-width="1"/><rect x="212" y="787.3000000000001" width="5" height="1.6" fill="#5a78d8"/><path d="M233.5 788.7V778h4V788.7" fill="#10171a" stroke="#f7646c" stroke-width="1"/><rect x="233" y="787.3000000000001" width="5" height="1.6" fill="#5a78d8"/><path d="M254.5 788.7V778h4V788.7" fill="#10171a" stroke="#f7646c" stroke-width="1"/><rect x="254" y="787.3000000000001" width="5" height="1.6" fill="#5a78d8"/><path d="M275.5 788.7V778h4V788.7" fill="#10171a" stroke="#f7646c" stroke-width="1"/><rect x="275" y="787.3000000000001" width="5" height="1.6" fill="#5a78d8"/><path d="M289.5 788.7V777.6h4V788.7" fill="#10171a" stroke="#f7646c" stroke-width="1"/><rect x="289" y="787.3000000000001" width="5" height="1.6" fill="#5a78d8"/><path d="M296.5 788.7V775.2h4V788.7" fill="#10171a" stroke="#f7646c" stroke-width="1"/><rect x="296" y="787.3000000000001" width="5" height="1.6" fill="#5a78d8"/><path d="M317.5 788.7V776h4V788.7" fill="#10171a" stroke="#f7646c" stroke-width="1"/><rect x="317" y="787.3000000000001" width="5" height="1.6" fill="#5a78d8"/><path d="M331.5 788.7V776h4V788.7" fill="#10171a" stroke="#f7646c" stroke-width="1"/><rect x="331" y="787.3000000000001" width="5" height="1.6" fill="#5a78d8"/><path d="M338.5 788.7V776h4V788.7" fill="#10171a" stroke="#f7646c" stroke-width="1"/><rect x="338" y="787.3000000000001" width="5" height="1.6" fill="#5a78d8"/><path d="M359.5 788.7V776.5h4V788.7" fill="#10171a" stroke="#f7646c" stroke-width="1"/><rect x="359" y="787.3000000000001" width="5" height="1.6" fill="#5a78d8"/><path d="M366.5 788.7V776.3h4V788.7" fill="#10171a" stroke="#f7646c" stroke-width="1"/><rect x="366" y="787.3000000000001" width="5" height="1.6" fill="#5a78d8"/><path d="M373.5 788.7V776.8h4V788.7" fill="#10171a" stroke="#f7646c" stroke-width="1"/><rect x="373" y="787.3000000000001" width="5" height="1.6" fill="#5a78d8"/><path d="M387.5 788.7V776h4V788.7" fill="#10171a" stroke="#f7646c" stroke-width="1"/><rect x="387" y="787.3000000000001" width="5" height="1.6" fill="#5a78d8"/><path d="M394.5 788.7V776.3h4V788.7" fill="#10171a" stroke="#f7646c" stroke-width="1"/><rect x="394" y="787.3000000000001" width="5" height="1.6" fill="#5a78d8"/><path d="M408.5 788.7V775.5h4V788.7" fill="#10171a" stroke="#f7646c" stroke-width="1"/><rect x="408" y="787.3000000000001" width="5" height="1.6" fill="#5a78d8"/><path d="M422.5 788.7V774.9h4V788.7" fill="#10171a" stroke="#f7646c" stroke-width="1"/><rect x="422" y="787.3000000000001" width="5" height="1.6" fill="#5a78d8"/><path d="M429.5 788.7V774.9h4V788.7" fill="#10171a" stroke="#f7646c" stroke-width="1"/><rect x="429" y="787.3000000000001" width="5" height="1.6" fill="#5a78d8"/><path d="M450.5 788.7V761.3h4V788.7" fill="#10171a" stroke="#f7646c" stroke-width="1"/><rect x="450" y="787.3000000000001" width="5" height="1.6" fill="#5a78d8"/><path d="M464.5 788.7V776h4V788.7" fill="#10171a" stroke="#f7646c" stroke-width="1"/><rect x="464" y="787.3000000000001" width="5" height="1.6" fill="#5a78d8"/><path d="M478.5 788.7V775.7h4V788.7" fill="#10171a" stroke="#f7646c" stroke-width="1"/><rect x="478" y="787.3000000000001" width="5" height="1.6" fill="#5a78d8"/><path d="M485.5 788.7V776h4V788.7" fill="#10171a" stroke="#f7646c" stroke-width="1"/><rect x="485" y="787.3000000000001" width="5" height="1.6" fill="#5a78d8"/><path d="M499.5 788.7V776h4V788.7" fill="#10171a" stroke="#f7646c" stroke-width="1"/><rect x="499" y="787.3000000000001" width="5" height="1.6" fill="#5a78d8"/><path d="M506.5 788.7V776h4V788.7" fill="#10171a" stroke="#f7646c" stroke-width="1"/><rect x="506" y="787.3000000000001" width="5" height="1.6" fill="#5a78d8"/><path d="M527.5 788.7V776.3h4V788.7" fill="#10171a" stroke="#f7646c" stroke-width="1"/><rect x="527" y="787.3000000000001" width="5" height="1.6" fill="#5a78d8"/><path d="M534.5 788.7V776h4V788.7" fill="#10171a" stroke="#f7646c" stroke-width="1"/><rect x="534" y="787.3000000000001" width="5" height="1.6" fill="#5a78d8"/><path d="M548.5 788.7V776h4V788.7" fill="#10171a" stroke="#f7646c" stroke-width="1"/><rect x="548" y="787.3000000000001" width="5" height="1.6" fill="#5a78d8"/><path d="M576.5 788.7V775.2h4V788.7" fill="#10171a" stroke="#f7646c" stroke-width="1"/><rect x="576" y="787.3000000000001" width="5" height="1.6" fill="#5a78d8"/><path d="M583.5 788.7V775.5h4V788.7" fill="#10171a" stroke="#f7646c" stroke-width="1"/><rect x="583" y="787.3000000000001" width="5" height="1.6" fill="#5a78d8"/><path d="M597.5 788.7V760.9h4V788.7" fill="#10171a" stroke="#f7646c" stroke-width="1"/><rect x="597" y="787.3000000000001" width="5" height="1.6" fill="#5a78d8"/><path d="M611.5 788.7V774.9h4V788.7" fill="#10171a" stroke="#f7646c" stroke-width="1"/><rect x="611" y="787.3000000000001" width="5" height="1.6" fill="#5a78d8"/><path d="M618.5 788.7V774.4h4V788.7" fill="#10171a" stroke="#f7646c" stroke-width="1"/><rect x="618" y="787.3000000000001" width="5" height="1.6" fill="#5a78d8"/><path d="M632.5 788.7V759.1h4V788.7" fill="#10171a" stroke="#f7646c" stroke-width="1"/><rect x="632" y="787.3000000000001" width="5" height="1.6" fill="#5a78d8"/><path d="M646.5 788.7V773.9h4V788.7" fill="#10171a" stroke="#f7646c" stroke-width="1"/><rect x="646" y="787.3000000000001" width="5" height="1.6" fill="#5a78d8"/><path d="M653.5 788.7V772.2h4V788.7" fill="#10171a" stroke="#f7646c" stroke-width="1"/><rect x="653" y="787.3000000000001" width="5" height="1.6" fill="#5a78d8"/><path d="M667.5 788.7V773.1h4V788.7" fill="#10171a" stroke="#f7646c" stroke-width="1"/><rect x="667" y="787.3000000000001" width="5" height="1.6" fill="#5a78d8"/><path d="M681.5 788.7V773.2h4V788.7" fill="#10171a" stroke="#f7646c" stroke-width="1"/><rect x="681" y="787.3000000000001" width="5" height="1.6" fill="#5a78d8"/><path d="M695.5 788.7V773.9h4V788.7" fill="#10171a" stroke="#f7646c" stroke-width="1"/><rect x="695" y="787.3000000000001" width="5" height="1.6" fill="#5a78d8"/><path d="M709.5 788.7V773.2h4V788.7" fill="#10171a" stroke="#f7646c" stroke-width="1"/><rect x="709" y="787.3000000000001" width="5" height="1.6" fill="#5a78d8"/><path d="M723.5 788.7V760h4V788.7" fill="#10171a" stroke="#f7646c" stroke-width="1"/><rect x="723" y="787.3000000000001" width="5" height="1.6" fill="#5a78d8"/><path d="M737.5 788.7V774.9h4V788.7" fill="#10171a" stroke="#f7646c" stroke-width="1"/><rect x="737" y="787.3000000000001" width="5" height="1.6" fill="#5a78d8"/><path d="M744.5 788.7V774.9h4V788.7" fill="#10171a" stroke="#f7646c" stroke-width="1"/><rect x="744" y="787.3000000000001" width="5" height="1.6" fill="#5a78d8"/><path d="M758.5 788.7V772.7h4V788.7" fill="#10171a" stroke="#f7646c" stroke-width="1"/><rect x="758" y="787.3000000000001" width="5" height="1.6" fill="#5a78d8"/><path d="M765.5 788.7V772.7h4V788.7" fill="#10171a" stroke="#f7646c" stroke-width="1"/><rect x="765" y="787.3000000000001" width="5" height="1.6" fill="#5a78d8"/><path d="M772.5 788.7V772.2h4V788.7" fill="#10171a" stroke="#f7646c" stroke-width="1"/><rect x="772" y="787.3000000000001" width="5" height="1.6" fill="#5a78d8"/><path d="M793.5 788.7V771.9h4V788.7" fill="#10171a" stroke="#f7646c" stroke-width="1"/><rect x="793" y="787.3000000000001" width="5" height="1.6" fill="#5a78d8"/><path d="M807.5 788.7V748.2h4V788.7" fill="#10171a" stroke="#f7646c" stroke-width="1"/><rect x="807" y="787.3000000000001" width="5" height="1.6" fill="#5a78d8"/><path d="M821.5 788.7V749h4V788.7" fill="#10171a" stroke="#f7646c" stroke-width="1"/><rect x="821" y="787.3000000000001" width="5" height="1.6" fill="#5a78d8"/><path d="M835.5 788.7V767.8h4V788.7" fill="#10171a" stroke="#f7646c" stroke-width="1"/><rect x="835" y="787.3000000000001" width="5" height="1.6" fill="#5a78d8"/><path d="M849.5 788.7V767h4V788.7" fill="#10171a" stroke="#f7646c" stroke-width="1"/><rect x="849" y="787.3000000000001" width="5" height="1.6" fill="#5a78d8"/><path d="M856.5 788.7V767h4V788.7" fill="#10171a" stroke="#f7646c" stroke-width="1"/><rect x="856" y="787.3000000000001" width="5" height="1.6" fill="#5a78d8"/><path d="M870.5 788.7V746.1h4V788.7" fill="#10171a" stroke="#f7646c" stroke-width="1"/><rect x="870" y="787.3000000000001" width="5" height="1.6" fill="#5a78d8"/><path d="M884.5 788.7V767.8h4V788.7" fill="#10171a" stroke="#f7646c" stroke-width="1"/><rect x="884" y="787.3000000000001" width="5" height="1.6" fill="#5a78d8"/><path d="M898.5 788.7V742.1h4V788.7" fill="#10171a" stroke="#f7646c" stroke-width="1"/><rect x="898" y="787.3000000000001" width="5" height="1.6" fill="#5a78d8"/><path d="M912.5 788.7V744.1h4V788.7" fill="#10171a" stroke="#f7646c" stroke-width="1"/><rect x="912" y="787.3000000000001" width="5" height="1.6" fill="#5a78d8"/><path d="M926.5 788.7V767.3h4V788.7" fill="#10171a" stroke="#f7646c" stroke-width="1"/><rect x="926" y="787.3000000000001" width="5" height="1.6" fill="#5a78d8"/><path d="M933.5 788.7V766.5h4V788.7" fill="#10171a" stroke="#f7646c" stroke-width="1"/><rect x="933" y="787.3000000000001" width="5" height="1.6" fill="#5a78d8"/><path d="M940.5 788.7V767h4V788.7" fill="#10171a" stroke="#f7646c" stroke-width="1"/><rect x="940" y="787.3000000000001" width="5" height="1.6" fill="#5a78d8"/><path d="M954.5 788.7V746.1h4V788.7" fill="#10171a" stroke="#f7646c" stroke-width="1"/><rect x="954" y="787.3000000000001" width="5" height="1.6" fill="#5a78d8"/><path d="M982.5 788.7V744.1h4V788.7" fill="#10171a" stroke="#f7646c" stroke-width="1"/><rect x="982" y="787.3000000000001" width="5" height="1.6" fill="#5a78d8"/><path d="M1010.5 788.7V746.1h4V788.7" fill="#10171a" stroke="#f7646c" stroke-width="1"/><rect x="1010" y="787.3000000000001" width="5" height="1.6" fill="#5a78d8"/></g><g clip-path="url(#c5)"><path d="M51.5 960V949.2h4V960" fill="#10171a" stroke="#f7646c" stroke-width="1"/><path d="M58.5 960V949.1h4V960" fill="#10171a" stroke="#f7646c" stroke-width="1"/><path d="M65.5 960V948.1h4V960" fill="#10171a" stroke="#f7646c" stroke-width="1"/><path d="M72.5 960V948.1h4V960" fill="#10171a" stroke="#f7646c" stroke-width="1"/><path d="M79.5 960V944.3h4V960" fill="#10171a" stroke="#f7646c" stroke-width="1"/><path d="M86.5 960V946.3h4V960" fill="#10171a" stroke="#f7646c" stroke-width="1"/><path d="M93.5 960V946.3h4V960" fill="#10171a" stroke="#f7646c" stroke-width="1"/><path d="M100.5 960V946.3h4V960" fill="#10171a" stroke="#f7646c" stroke-width="1"/><path d="M107.5 960V946.3h4V960" fill="#10171a" stroke="#f7646c" stroke-width="1"/><path d="M114.5 960V946.3h4V960" fill="#10171a" stroke="#f7646c" stroke-width="1"/><path d="M121.5 960V942.3h4V960" fill="#10171a" stroke="#f7646c" stroke-width="1"/><path d="M128.5 960V942.3h4V960" fill="#10171a" stroke="#f7646c" stroke-width="1"/><path d="M135.5 960V940.7h4V960" fill="#10171a" stroke="#f7646c" stroke-width="1"/><path d="M142.5 960V940.7h4V960" fill="#10171a" stroke="#f7646c" stroke-width="1"/><path d="M149.5 960V945.1h4V960" fill="#10171a" stroke="#f7646c" stroke-width="1"/><path d="M156.5 960V940.8h4V960" fill="#10171a" stroke="#f7646c" stroke-width="1"/><path d="M163.5 960V948.2h4V960" fill="#10171a" stroke="#f7646c" stroke-width="1"/><path d="M170.5 960V948.3h4V960" fill="#10171a" stroke="#f7646c" stroke-width="1"/><path d="M177.5 960V951.2h4V960" fill="#10171a" stroke="#f7646c" stroke-width="1"/><path d="M184.5 960V951.2h4V960" fill="#10171a" stroke="#f7646c" stroke-width="1"/><path d="M191.5 960V951.2h4V960" fill="#10171a" stroke="#f7646c" stroke-width="1"/><path d="M198.5 960V951.2h4V960" fill="#10171a" stroke="#f7646c" stroke-width="1"/><path d="M205.5 960V953.5h4V960" fill="#10171a" stroke="#f7646c" stroke-width="1"/><path d="M212.5 960V953.5h4V960" fill="#10171a" stroke="#f7646c" stroke-width="1"/><path d="M219.5 960V950.4h4V960" fill="#10171a" stroke="#f7646c" stroke-width="1"/><path d="M226.5 960V950.4h4V960" fill="#10171a" stroke="#f7646c" stroke-width="1"/><path d="M233.5 960V950.5h4V960" fill="#10171a" stroke="#f7646c" stroke-width="1"/><path d="M240.5 960V949.4h4V960" fill="#10171a" stroke="#f7646c" stroke-width="1"/><path d="M247.5 960V949.4h4V960" fill="#10171a" stroke="#f7646c" stroke-width="1"/><path d="M254.5 960V949.4h4V960" fill="#10171a" stroke="#f7646c" stroke-width="1"/><path d="M261.5 960V945.6h4V960" fill="#10171a" stroke="#f7646c" stroke-width="1"/><path d="M268.5 960V941.4h4V960" fill="#10171a" stroke="#f7646c" stroke-width="1"/><path d="M275.5 960V936.8h4V960" fill="#10171a" stroke="#f7646c" stroke-width="1"/><path d="M282.5 960V930.4h4V960" fill="#10171a" stroke="#f7646c" stroke-width="1"/><path d="M289.5 960V936.1h4V960" fill="#10171a" stroke="#f7646c" stroke-width="1"/><path d="M296.5 960V932.2h4V960" fill="#10171a" stroke="#f7646c" stroke-width="1"/><path d="M303.5 960V934.3h4V960" fill="#10171a" stroke="#f7646c" stroke-width="1"/><path d="M310.5 960V934.3h4V960" fill="#10171a" stroke="#f7646c" stroke-width="1"/><path d="M317.5 960V934.3h4V960" fill="#10171a" stroke="#f7646c" stroke-width="1"/><path d="M324.5 960V936.1h4V960" fill="#10171a" stroke="#f7646c" stroke-width="1"/><path d="M331.5 960V936.0h4V960" fill="#10171a" stroke="#f7646c" stroke-width="1"/><path d="M338.5 960V936.9h4V960" fill="#10171a" stroke="#f7646c" stroke-width="1"/><path d="M345.5 960V940.9h4V960" fill="#10171a" stroke="#f7646c" stroke-width="1"/><path d="M352.5 960V940.8h4V960" fill="#10171a" stroke="#f7646c" stroke-width="1"/><path d="M359.5 960V940.8h4V960" fill="#10171a" stroke="#f7646c" stroke-width="1"/><path d="M366.5 960V940.3h4V960" fill="#10171a" stroke="#f7646c" stroke-width="1"/><path d="M373.5 960V939.6h4V960" fill="#10171a" stroke="#f7646c" stroke-width="1"/><path d="M380.5 960V940.0h4V960" fill="#10171a" stroke="#f7646c" stroke-width="1"/><path d="M387.5 960V940.0h4V960" fill="#10171a" stroke="#f7646c" stroke-width="1"/><path d="M394.5 960V935.9h4V960" fill="#10171a" stroke="#f7646c" stroke-width="1"/><path d="M401.5 960V933.1h4V960" fill="#10171a" stroke="#f7646c" stroke-width="1"/><path d="M408.5 960V933.0h4V960" fill="#10171a" stroke="#f7646c" stroke-width="1"/><path d="M415.5 960V929.6h4V960" fill="#10171a" stroke="#f7646c" stroke-width="1"/><path d="M422.5 960V929.6h4V960" fill="#10171a" stroke="#f7646c" stroke-width="1"/><path d="M429.5 960V928.7h4V960" fill="#10171a" stroke="#f7646c" stroke-width="1"/><path d="M436.5 960V929.2h4V960" fill="#10171a" stroke="#f7646c" stroke-width="1"/><path d="M443.5 960V929.2h4V960" fill="#10171a" stroke="#f7646c" stroke-width="1"/><path d="M450.5 960V929.2h4V960" fill="#10171a" stroke="#f7646c" stroke-width="1"/><path d="M457.5 960V935.2h4V960" fill="#10171a" stroke="#f7646c" stroke-width="1"/><path d="M464.5 960V935.2h4V960" fill="#10171a" stroke="#f7646c" stroke-width="1"/><path d="M471.5 960V934.6h4V960" fill="#10171a" stroke="#f7646c" stroke-width="1"/><path d="M478.5 960V934.6h4V960" fill="#10171a" stroke="#f7646c" stroke-width="1"/><path d="M485.5 960V932.6h4V960" fill="#10171a" stroke="#f7646c" stroke-width="1"/><path d="M492.5 960V935.2h4V960" fill="#10171a" stroke="#f7646c" stroke-width="1"/><path d="M499.5 960V935.2h4V960" fill="#10171a" stroke="#f7646c" stroke-width="1"/><path d="M506.5 960V939.0h4V960" fill="#10171a" stroke="#f7646c" stroke-width="1"/><path d="M513.5 960V939.8h4V960" fill="#10171a" stroke="#f7646c" stroke-width="1"/><path d="M520.5 960V939.8h4V960" fill="#10171a" stroke="#f7646c" stroke-width="1"/><path d="M527.5 960V939.8h4V960" fill="#10171a" stroke="#f7646c" stroke-width="1"/><path d="M534.5 960V935.5h4V960" fill="#10171a" stroke="#f7646c" stroke-width="1"/><path d="M541.5 960V931.2h4V960" fill="#10171a" stroke="#f7646c" stroke-width="1"/><path d="M548.5 960V928.2h4V960" fill="#10171a" stroke="#f7646c" stroke-width="1"/><path d="M555.5 960V930.1h4V960" fill="#10171a" stroke="#f7646c" stroke-width="1"/><path d="M562.5 960V930.1h4V960" fill="#10171a" stroke="#f7646c" stroke-width="1"/><path d="M569.5 960V930.1h4V960" fill="#10171a" stroke="#f7646c" stroke-width="1"/><path d="M576.5 960V930.1h4V960" fill="#10171a" stroke="#f7646c" stroke-width="1"/><path d="M583.5 960V925.4h4V960" fill="#10171a" stroke="#f7646c" stroke-width="1"/><path d="M590.5 960V926.9h4V960" fill="#10171a" stroke="#f7646c" stroke-width="1"/><path d="M597.5 960V927.0h4V960" fill="#10171a" stroke="#f7646c" stroke-width="1"/><path d="M604.5 960V926.5h4V960" fill="#10171a" stroke="#f7646c" stroke-width="1"/><path d="M611.5 960V926.5h4V960" fill="#10171a" stroke="#f7646c" stroke-width="1"/><path d="M618.5 960V924.8h4V960" fill="#10171a" stroke="#f7646c" stroke-width="1"/><path d="M625.5 960V922.7h4V960" fill="#10171a" stroke="#f7646c" stroke-width="1"/><path d="M632.5 960V922.7h4V960" fill="#10171a" stroke="#f7646c" stroke-width="1"/><path d="M639.5 960V915.9h4V960" fill="#10171a" stroke="#f7646c" stroke-width="1"/><path d="M646.5 960V910.4h4V960" fill="#10171a" stroke="#f7646c" stroke-width="1"/><path d="M653.5 960V910.8h4V960" fill="#10171a" stroke="#f7646c" stroke-width="1"/><path d="M660.5 960V916.5h4V960" fill="#10171a" stroke="#f7646c" stroke-width="1"/><path d="M667.5 960V916.5h4V960" fill="#10171a" stroke="#f7646c" stroke-width="1"/><path d="M674.5 960V917.6h4V960" fill="#10171a" stroke="#f7646c" stroke-width="1"/><path d="M681.5 960V917.6h4V960" fill="#10171a" stroke="#f7646c" stroke-width="1"/><path d="M688.5 960V920.0h4V960" fill="#10171a" stroke="#f7646c" stroke-width="1"/><path d="M695.5 960V920.0h4V960" fill="#10171a" stroke="#f7646c" stroke-width="1"/><path d="M702.5 960V914.7h4V960" fill="#10171a" stroke="#f7646c" stroke-width="1"/><path d="M709.5 960V918.7h4V960" fill="#10171a" stroke="#f7646c" stroke-width="1"/><path d="M716.5 960V924.2h4V960" fill="#10171a" stroke="#f7646c" stroke-width="1"/><path d="M723.5 960V924.2h4V960" fill="#10171a" stroke="#f7646c" stroke-width="1"/><path d="M730.5 960V927.4h4V960" fill="#10171a" stroke="#f7646c" stroke-width="1"/><path d="M737.5 960V927.4h4V960" fill="#10171a" stroke="#f7646c" stroke-width="1"/><path d="M744.5 960V922.5h4V960" fill="#10171a" stroke="#f7646c" stroke-width="1"/><path d="M751.5 960V916.0h4V960" fill="#10171a" stroke="#f7646c" stroke-width="1"/><path d="M758.5 960V912.7h4V960" fill="#10171a" stroke="#f7646c" stroke-width="1"/><path d="M765.5 960V909.5h4V960" fill="#10171a" stroke="#f7646c" stroke-width="1"/><path d="M772.5 960V903.9h4V960" fill="#10171a" stroke="#f7646c" stroke-width="1"/><path d="M779.5 960V899.1h4V960" fill="#10171a" stroke="#f7646c" stroke-width="1"/><path d="M786.5 960V892.3h4V960" fill="#10171a" stroke="#f7646c" stroke-width="1"/><path d="M793.5 960V884.9h4V960" fill="#10171a" stroke="#f7646c" stroke-width="1"/><path d="M800.5 960V882.9h4V960" fill="#10171a" stroke="#f7646c" stroke-width="1"/><path d="M807.5 960V882.9h4V960" fill="#10171a" stroke="#f7646c" stroke-width="1"/><path d="M814.5 960V883.8h4V960" fill="#10171a" stroke="#f7646c" stroke-width="1"/><path d="M821.5 960V883.7h4V960" fill="#10171a" stroke="#f7646c" stroke-width="1"/><path d="M828.5 960V873.8h4V960" fill="#10171a" stroke="#f7646c" stroke-width="1"/><path d="M835.5 960V876.1h4V960" fill="#10171a" stroke="#f7646c" stroke-width="1"/><path d="M842.5 960V874.2h4V960" fill="#10171a" stroke="#f7646c" stroke-width="1"/><path d="M849.5 960V874.2h4V960" fill="#10171a" stroke="#f7646c" stroke-width="1"/><path d="M856.5 960V866.7h4V960" fill="#10171a" stroke="#f7646c" stroke-width="1"/><path d="M863.5 960V875.8h4V960" fill="#10171a" stroke="#f7646c" stroke-width="1"/><path d="M870.5 960V875.8h4V960" fill="#10171a" stroke="#f7646c" stroke-width="1"/><path d="M877.5 960V869.9h4V960" fill="#10171a" stroke="#f7646c" stroke-width="1"/><path d="M884.5 960V861.6h4V960" fill="#10171a" stroke="#f7646c" stroke-width="1"/><path d="M891.5 960V860.3h4V960" fill="#10171a" stroke="#f7646c" stroke-width="1"/><path d="M898.5 960V860.4h4V960" fill="#10171a" stroke="#f7646c" stroke-width="1"/><path d="M905.5 960V866.9h4V960" fill="#10171a" stroke="#f7646c" stroke-width="1"/><path d="M912.5 960V866.9h4V960" fill="#10171a" stroke="#f7646c" stroke-width="1"/><path d="M919.5 960V863.1h4V960" fill="#10171a" stroke="#f7646c" stroke-width="1"/><path d="M926.5 960V866.6h4V960" fill="#10171a" stroke="#f7646c" stroke-width="1"/><path d="M933.5 960V871.5h4V960" fill="#10171a" stroke="#f7646c" stroke-width="1"/><path d="M940.5 960V868.9h4V960" fill="#10171a" stroke="#f7646c" stroke-width="1"/><path d="M947.5 960V873.4h4V960" fill="#10171a" stroke="#f7646c" stroke-width="1"/><path d="M954.5 960V873.4h4V960" fill="#10171a" stroke="#f7646c" stroke-width="1"/><path d="M961.5 960V866.6h4V960" fill="#10171a" stroke="#f7646c" stroke-width="1"/><path d="M968.5 960V866.7h4V960" fill="#10171a" stroke="#f7646c" stroke-width="1"/><path d="M975.5 960V866.7h4V960" fill="#10171a" stroke="#f7646c" stroke-width="1"/><path d="M982.5 960V866.6h4V960" fill="#10171a" stroke="#f7646c" stroke-width="1"/><path d="M989.5 960V872.6h4V960" fill="#10171a" stroke="#f7646c" stroke-width="1"/><path d="M996.5 960V872.6h4V960" fill="#10171a" stroke="#f7646c" stroke-width="1"/><path d="M1003.5 960V872.6h4V960" fill="#10171a" stroke="#f7646c" stroke-width="1"/><path d="M1010.5 960V872.6h4V960" fill="#10171a" stroke="#f7646c" stroke-width="1"/></g><text x="51" y="968.9" font-family="Liberation Sans, Noto Sans CJK SC, sans-serif" font-size="12.2" font-weight="normal" fill="#f4f4f4" textLength="50.3" lengthAdjust="spacingAndGlyphs">2025/03</text><text x="125.5" y="968.9" font-family="Liberation Sans, Noto Sans CJK SC, sans-serif" font-size="12.2" font-weight="normal" fill="#f4f4f4" textLength="71" lengthAdjust="spacingAndGlyphs">2025/03/26</text><text x="216.5" y="968.9" font-family="Liberation Sans, Noto Sans CJK SC, sans-serif" font-size="12.2" font-weight="normal" fill="#f4f4f4" textLength="71" lengthAdjust="spacingAndGlyphs">2025/04/15</text><text x="307.5" y="968.9" font-family="Liberation Sans, Noto Sans CJK SC, sans-serif" font-size="12.2" font-weight="normal" fill="#f4f4f4" textLength="71" lengthAdjust="spacingAndGlyphs">2025/05/07</text><text x="398.5" y="968.9" font-family="Liberation Sans, Noto Sans CJK SC, sans-serif" font-size="12.2" font-weight="normal" fill="#f4f4f4" textLength="71" lengthAdjust="spacingAndGlyphs">2025/05/26</text><text x="489.5" y="968.9" font-family="Liberation Sans, Noto Sans CJK SC, sans-serif" font-size="12.2" font-weight="normal" fill="#f4f4f4" textLength="71" lengthAdjust="spacingAndGlyphs">2025/06/13</text><text x="580.5" y="968.9" font-family="Liberation Sans, Noto Sans CJK SC, sans-serif" font-size="12.2" font-weight="normal" fill="#f4f4f4" textLength="71" lengthAdjust="spacingAndGlyphs">2025/07/02</text><text x="671.5" y="968.9" font-family="Liberation Sans, Noto Sans CJK SC, sans-serif" font-size="12.2" font-weight="normal" fill="#f4f4f4" textLength="71" lengthAdjust="spacingAndGlyphs">2025/07/21</text><text x="762.5" y="968.9" font-family="Liberation Sans, Noto Sans CJK SC, sans-serif" font-size="12.2" font-weight="normal" fill="#f4f4f4" textLength="71" lengthAdjust="spacingAndGlyphs">2025/08/07</text><text x="853.5" y="968.9" font-family="Liberation Sans, Noto Sans CJK SC, sans-serif" font-size="12.2" font-weight="normal" fill="#f4f4f4" textLength="71" lengthAdjust="spacingAndGlyphs">2025/08/26</text><text x="944.5" y="968.9" font-family="Liberation Sans, Noto Sans CJK SC, sans-serif" font-size="12.2" font-weight="normal" fill="#f4f4f4" textLength="71" lengthAdjust="spacingAndGlyphs">2025/09/12</text></svg>

<!-- splitter -->
<div class="abs" style="left:1096px;top:58px;width:6px;height:911px;background:#202123;border-right:1px solid #16171a"></div>
<div class="abs" style="left:1096px;top:477px;width:5px;height:79.5px;background:#55586a"></div>
<svg class="abs" style="left:1096px;top:477px" width="6" height="79" viewBox="0 0 6 79"><path d="M4.8 15.8V23.2L0.6 19.5z" fill="#fff"/><path d="M0.8 55.8V63.2L5 59.5z" fill="#fff"/></svg>

<div id="right">
 <!-- tabs -->
 <div class="abs" style="left:0;top:0;width:59px;height:25px;background:#242426;border:1px solid #000;text-align:center;line-height:26px;color:#e6e6e6">汇总</div>
 <div class="abs" style="left:60px;top:0;width:60px;height:25px;background:#189aff;text-align:center;line-height:28px;color:#fff">单日</div>
 <!-- date row -->
 <div class="abs" style="left:0;top:26px;width:548px;height:25px;background:#1a1b1f"></div>
 <div class="rt" style="left:5px;top:27px;line-height:24px">单日持仓</div>
 <div class="abs" style="left:63px;top:27px;width:100px;height:24px;background:#0e0f11"></div>
 <div class="rt" style="left:68px;top:27px;line-height:23px;font-size:13px">2025-09-15</div>
 <svg class="abs" style="left:144.5px;top:31px" width="15" height="15" viewBox="0 0 16 16" fill="none" stroke="#e8e8e8"><rect x="1.5" y="3" width="12.5" height="11.5" stroke-width="1.2"/><path d="M1.5 6.3H14" stroke-width="1.6"/><path d="M4.5 1.2V4M11 1.2V4" stroke-width="1.3"/><path d="M4 9H5.6M7 9H8.6M10 9H11.6M4 11.8H5.6M7 11.8H8.6M10 11.8H11.6" stroke-width="1.3"/></svg>
 <!-- positions header -->
 <div class="hd" style="left:0;top:51.3px;width:548px">
  <span style="left:7px">日期</span><u style="left:115px"></u><span style="left:124px">合约代码</span><u style="left:231px"></u><span style="left:240px">最新价</span><u style="left:347px"></u><span style="left:356px">仓位</span><u style="left:463px"></u><span style="left:472px">多/空</span>
 </div>
 <div class="grp" style="left:0;top:70.5px;width:548px">
  <svg class="abs" style="left:1.5px;top:1.5px" width="16" height="16" viewBox="0 0 16 16" fill="none" stroke="#f0f0f0"><circle cx="8" cy="8" r="6.9" stroke-width="1.1"/><path d="M4.6 9.8L8 6.4L11.4 9.8" stroke-width="1.7"/></svg>
  <span style="left:26px;font-size:13px">2025-09-15</span><span style="left:126px;font-size:12px">( 2 持仓)</span>
 </div>
 <div class="row up" style="left:0;top:89.5px;width:548px"><span style="left:0;width:118px">15:30:00</span><span style="left:116px;width:118px">002642.SZ</span><span style="left:230.5px;width:120px">11.170</span><span style="left:347px;width:119px">11100</span><span style="left:463px;width:120px">多</span></div>
 <div class="row up" style="left:0;top:113.5px;width:548px"><span style="left:0;width:118px">15:30:00</span><span style="left:116px;width:118px">601116.SS</span><span style="left:230.5px;width:120px">18.190</span><span style="left:347px;width:119px">6800</span><span style="left:463px;width:120px">多</span></div>
 <!-- h scrollbar -->
 <div class="abs" style="left:0;top:455px;width:548px;height:17px;background:#121316;border-top:1px solid #262930"></div>
 <svg class="abs" style="left:5px;top:460px" width="6" height="8" viewBox="0 0 6 8"><path d="M5 0.5V7.5L1 4z" fill="#4a4d57"/></svg>
 <div class="abs" style="left:17px;top:460px;width:531px;height:8px;background:#4a4d57"></div>
 <!-- buy / sell -->
 <div class="abs" style="left:0;top:472px;width:548px;height:24.5px;background:#1a1b1f"></div>
 <div class="rt" style="left:5px;top:472px;line-height:27px">单日买入</div>
 <div class="rt" style="left:414px;top:472px;line-height:27px">单日卖出</div>
 <div class="hd" style="left:0;top:496.5px;width:408px;height:20px">
  <span style="left:7px">日期</span><u style="left:99px"></u><span style="left:108px">合约代码</span><u style="left:199px"></u><span style="left:208px">买/卖</span><u style="left:299px"></u><span style="left:308px">开/平</span><u style="left:399px"></u>
 </div>
 <div class="hd" style="left:409px;top:496.5px;width:139px;height:20px">
  <span style="left:8px">日期</span><u style="left:99px"></u><span style="left:108px">合约代码</span>
 </div>
 <div class="grp" style="left:0;top:516.5px;width:408px;height:18.5px">
  <svg class="abs" style="left:1.5px;top:1.5px" width="16" height="16" viewBox="0 0 16 16" fill="none" stroke="#f0f0f0"><circle cx="8" cy="8" r="6.9" stroke-width="1.1"/><path d="M4.6 9.8L8 6.4L11.4 9.8" stroke-width="1.7"/></svg>
  <span style="left:26px;font-size:13px">2025-09-15</span><span style="left:126px;font-size:12px">( 2 交易)</span>
 </div>
 <div class="row" style="left:0;top:535px;width:408px"><span style="left:0;width:102px">15:00:00</span><span style="left:100px;width:102px">002642.SZ</span><span style="left:200px;width:100px">买</span><span style="left:300px;width:100px">-</span></div>
 <div class="row" style="left:0;top:559px;width:408px"><span style="left:0;width:102px">15:00:00</span><span style="left:100px;width:102px">601116.SS</span><span style="left:200px;width:100px">买</span><span style="left:300px;width:100px">-</span></div>
 <div class="abs" style="left:408px;top:496.5px;width:1px;height:415px;background:#2a2c33"></div>
 <!-- bottom scrollbar -->
 <div class="abs" style="left:0;top:900px;width:408px;height:11px;background:#15161a;border-top:1px solid #2a2c33"></div>
 <div class="abs" style="left:17px;top:905px;width:217px;height:6px;background:#4a4d57"></div>
 <svg class="abs" style="left:5px;top:905px" width="6" height="6" viewBox="0 0 6 6"><path d="M5 1V8L1 4.5z" fill="#4a4d57"/></svg>
 <svg class="abs" style="left:397px;top:905px" width="6" height="6" viewBox="0 0 6 6"><path d="M1 1V8L5 4.5z" fill="#4a4d57"/></svg>
</div>
</body>
</html>
